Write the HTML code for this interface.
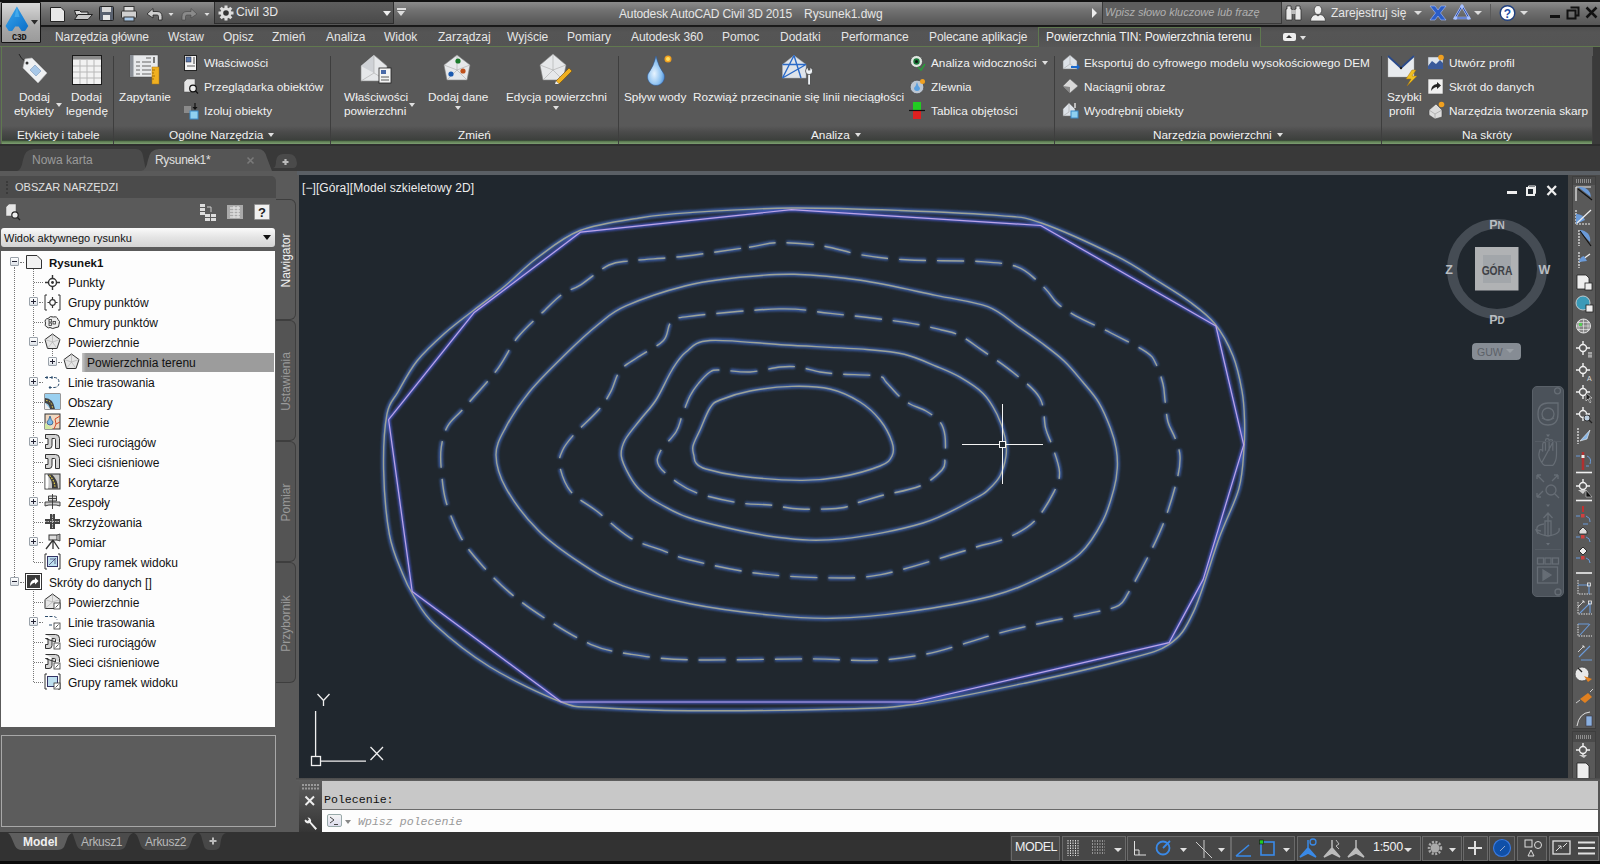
<!DOCTYPE html>
<html><head><meta charset="utf-8">
<style>
*{margin:0;padding:0;box-sizing:border-box}
html,body{width:1600px;height:864px;overflow:hidden;background:#2b2b2b;font-family:"Liberation Sans",sans-serif;font-size:12px;color:#e8e8e8}
.a{position:absolute;white-space:nowrap}
#title{left:0;top:0;width:1600px;height:27px;background:linear-gradient(#0c0c0c 0,#0c0c0c 2px,#8a8a8a 2.5px,#727272 10px,#5e5e5e 20px,#575757 24.5px,#181818 25px,#1c1c1c 27px)}
#tabs{left:0;top:27px;width:1600px;height:20px;background:linear-gradient(#4e4e4e,#555 5px,#545454)}
#ribbon{left:0;top:46px;width:1600px;height:100px;background:#595959}
#ftabs{left:0;top:146px;width:1600px;height:30px;background:#393939}
#pal{left:0;top:171px;width:299px;height:661px;background:#5a5a5a}
#draw{left:299px;top:175px;width:1268px;height:604px;background:#212830}
#rtb{left:1567px;top:171px;width:33px;height:608px;background:#505050}
#cmd{left:298px;top:779px;width:1302px;height:53px;background:#c6c6c6}
#status{left:0;top:832px;width:1600px;height:32px;background:#333}
.t{font-size:12px;color:#e6e6e6}
.tri{position:absolute;width:0;height:0;border-left:3.5px solid transparent;border-right:3.5px solid transparent;border-top:4px solid #e0e0e0}
</style></head><body>
<div id="tabs" class="a"></div>
<div id="ribbon" class="a"></div>
<div id="ftabs" class="a"></div>
<div id="pal" class="a"></div>
<div id="draw" class="a"></div>
<div id="rtb" class="a"></div>
<div id="cmd" class="a"></div>
<div id="status" class="a"></div>
<!-- TITLE BAR -->
<div id="title" class="a">
  <div class="a" style="left:0;top:0;width:1600px;height:2px;background:#111"></div>
</div>
<!-- app button -->
<div class="a" style="left:1px;top:2px;width:40px;height:41px;background:linear-gradient(#d8d8d8,#a9a9a9 60%,#9a9a9a);border:1px solid #151515;border-radius:1px">
  <svg class="a" style="left:3px;top:2px" width="36" height="38" viewBox="0 0 36 38">
    <defs><linearGradient id="lg1" x1="0" y1="0" x2="1" y2="1"><stop offset="0" stop-color="#3aa8ee"/><stop offset="1" stop-color="#0a6ec8"/></linearGradient></defs>
    <path d="M11.9 1.5 L23.3 21 L20 26 H16.6 L13.6 21.5 H10.2 L7.2 26 H3.8 L0.5 21 Z" fill="url(#lg1)"/>
    <path d="M11.9 1.5 L14.5 12 L9.5 12 Z" fill="#5cc0f8" opacity="0.5"/>
    <path d="M26 15 L33 15 L29.5 19.5 Z" fill="#2a2a2a"/>
    <text x="7" y="35" font-family="Liberation Mono" font-size="8.5" font-weight="bold" fill="#111" letter-spacing="-0.3">C3D</text>
  </svg>
</div>
<!-- QAT icons -->
<svg class="a" style="left:44px;top:2px" width="170" height="23" viewBox="0 0 170 23">
  <!-- new -->
  <path d="M6.5 5.5 H17 L20.5 9 V19.5 H6.5 Z" fill="#e8e8e8" stroke="#222" stroke-width="1"/>
  <!-- open -->
  <path d="M30.5 8.5 h5 l1.5 1.5 h7 v3 h-12 z" fill="#d8d8d8" stroke="#222"/>
  <path d="M30.5 17.5 L34 12.5 H48.5 L44 17.5 Z" fill="#c8c8c8" stroke="#222"/>
  <!-- save -->
  <rect x="55.5" y="4.5" width="14" height="14" rx="1" fill="#5a6270" stroke="#222"/>
  <rect x="58" y="5" width="9" height="5" fill="#d8d8d8"/>
  <rect x="59" y="13" width="7" height="5" fill="#e8e8e8"/>
  <!-- print -->
  <rect x="80" y="4.5" width="10" height="5" fill="#e0e0e0" stroke="#333"/>
  <rect x="77.5" y="9" width="15" height="7" rx="1" fill="#d0d0d0" stroke="#333"/>
  <rect x="80" y="15" width="10" height="4" fill="#a8c8e8" stroke="#333"/>
  <!-- undo -->
  <path d="M103 12 L109 6.5 V9.5 H113 Q118 9.5 118 14.5 V18 H114.5 V14.5 Q114.5 13 113 13 H109 V16 Z" fill="#d0d0d0" stroke="#222" stroke-width="0.8"/>
  <path d="M124.5 11 h5 l-2.5 3 z" fill="#e0e0e0"/>
  <!-- redo -->
  <path d="M153 12 L147 6.5 V9.5 H143 Q138 9.5 138 14.5 V18 H141.5 V14.5 Q141.5 13 143 13 H147 V16 Z" fill="#8a8a8a" stroke="#444" stroke-width="0.6"/>
  <path d="M160.5 11 h5 l-2.5 3 z" fill="#e0e0e0"/>
</svg>
<!-- workspace -->
<div class="a" style="left:214px;top:2px;width:180px;height:22px;background:linear-gradient(#5e5e5e,#4a4a4a);border:1px solid #2e2e2e;border-top:none"></div>
<svg class="a" style="left:217px;top:4px" width="18" height="18" viewBox="0 0 18 18">
  <g fill="#ddd"><circle cx="9" cy="9" r="5.5"/>
  <rect x="7.5" y="1.5" width="3" height="15"/><rect x="1.5" y="7.5" width="15" height="3"/>
  <rect x="7.5" y="1.5" width="3" height="15" transform="rotate(45 9 9)"/><rect x="7.5" y="1.5" width="3" height="15" transform="rotate(-45 9 9)"/></g>
  <circle cx="9" cy="9" r="2.8" fill="#333"/>
</svg>
<div class="a" style="left:236px;top:5px;font-size:12.2px;color:#e8e8e8">Civil 3D</div>
<div class="a" style="left:383px;top:11px;width:0;height:0;border-left:4px solid transparent;border-right:4px solid transparent;border-top:5px solid #eee"></div>
<div class="a" style="left:397px;top:8px;width:9px;height:2px;background:#ddd"></div>
<div class="a" style="left:397px;top:11px;width:0;height:0;border-left:4.5px solid transparent;border-right:4.5px solid transparent;border-top:5px solid #ddd"></div>
<div class="a" style="left:619px;top:7px;font-size:12px;color:#e6e6e6;letter-spacing:-0.15px">Autodesk AutoCAD Civil 3D 2015</div>
<div class="a" style="left:804px;top:7px;font-size:12px;color:#e6e6e6">Rysunek1.dwg</div>
<div class="a" style="left:1092px;top:8px;width:0;height:0;border-top:5px solid transparent;border-bottom:5px solid transparent;border-left:5px solid #eee"></div>
<div class="a" style="left:1102px;top:2px;width:180px;height:22px;background:#5e5e5e;border:1px solid #3a3a3a;border-top:none"></div>
<div class="a" style="left:1105px;top:6px;font-size:11px;font-style:italic;color:#b0b0b0">Wpisz słowo kluczowe lub frazę</div>
<svg class="a" style="left:1284px;top:4px" width="20" height="18" viewBox="0 0 20 18">
  <path d="M3 2 h4 v3 h1 v11 h-6 v-11 h1z M12 2 h4 v3 h1 v11 h-6 v-11 h1z" fill="#e8e8e8" stroke="#222" stroke-width="0.7"/>
  <rect x="7" y="6" width="5" height="4" fill="#bbb"/>
</svg>
<svg class="a" style="left:1309px;top:4px" width="18" height="18" viewBox="0 0 18 18">
  <ellipse cx="9" cy="6" rx="3.8" ry="4.5" fill="#eee" stroke="#333" stroke-width="0.7"/>
  <path d="M1.5 17 Q2 11 7 10.5 L9 12 L11 10.5 Q16 11 16.5 17 Z" fill="#eee" stroke="#333" stroke-width="0.7"/>
</svg>
<div class="a" style="left:1331px;top:6px;font-size:12px;color:#e6e6e6">Zarejestruj się</div>
<div class="a" style="left:1414px;top:11px;width:0;height:0;border-left:4px solid transparent;border-right:4px solid transparent;border-top:4px solid #ddd"></div>
<svg class="a" style="left:1429px;top:5px" width="18" height="16" viewBox="0 0 18 16">
  <path d="M1 1 h5 l3 4 l3 -4 h5 l-5.5 7 l5.5 7 h-5 l-3 -4 l-3 4 h-5 l5.5 -7z" fill="#2a5dc8" stroke="#a8c0ff" stroke-width="0.6"/>
</svg>
<svg class="a" style="left:1453px;top:4px" width="18" height="17" viewBox="0 0 18 17">
  <path d="M9 2 L16 14 H2 Z" fill="none" stroke="#a8c0ff" stroke-width="2.4"/>
  <path d="M9 2 L16 14 H2 Z" fill="none" stroke="#2a4aa8" stroke-width="1"/>
  <circle cx="9" cy="2.5" r="1.8" fill="#a8c0ff"/><circle cx="2.5" cy="14" r="1.8" fill="#a8c0ff"/><circle cx="15.5" cy="14" r="1.8" fill="#a8c0ff"/>
</svg>
<div class="a" style="left:1474px;top:11px;width:0;height:0;border-left:4px solid transparent;border-right:4px solid transparent;border-top:4px solid #ddd"></div>
<div class="a" style="left:1490px;top:4px;width:1px;height:18px;background:#5a5a5a"></div>
<svg class="a" style="left:1499px;top:4px" width="18" height="18" viewBox="0 0 18 18">
  <circle cx="8.5" cy="9" r="7.3" fill="#fff" stroke="#1f3f7f" stroke-width="1.4"/>
  <text x="8.5" y="13.5" text-anchor="middle" font-family="Liberation Sans" font-weight="bold" font-size="12" fill="#1f4fa8">?</text>
</svg>
<div class="a" style="left:1520px;top:11px;width:0;height:0;border-left:4px solid transparent;border-right:4px solid transparent;border-top:4px solid #ddd"></div>
<div class="a" style="left:1550px;top:15px;width:10px;height:3px;background:#111"></div>
<svg class="a" style="left:1566px;top:6px" width="14" height="14" viewBox="0 0 14 14">
  <path d="M4.5 1.5 h8 v8 h-3 M1.5 4.5 h8 v8 h-8 z" fill="none" stroke="#111" stroke-width="2"/>
</svg>
<svg class="a" style="left:1585px;top:6px" width="13" height="13" viewBox="0 0 13 13">
  <path d="M1.5 1.5 L11.5 11.5 M11.5 1.5 L1.5 11.5" stroke="#111" stroke-width="2.5"/>
</svg>
<!-- TABS ROW -->
<div class="a" style="left:0;top:46px;width:1600px;height:1px;background:#61784f"></div>
<div class="a" style="left:1038px;top:27px;width:223px;height:20px;background:linear-gradient(#4c4c4c,#575757);border:1px solid #5f7850;border-bottom:none"></div>
<div class="a t" style="top:30px;left:55px;letter-spacing:-0.1px">Narzędzia główne</div>
<div class="a t" style="top:30px;left:168px">Wstaw</div>
<div class="a t" style="top:30px;left:223px">Opisz</div>
<div class="a t" style="top:30px;left:272px">Zmień</div>
<div class="a t" style="top:30px;left:326px">Analiza</div>
<div class="a t" style="top:30px;left:384px">Widok</div>
<div class="a t" style="top:30px;left:438px">Zarządzaj</div>
<div class="a t" style="top:30px;left:507px">Wyjście</div>
<div class="a t" style="top:30px;left:567px">Pomiary</div>
<div class="a t" style="top:30px;left:631px;letter-spacing:-0.1px">Autodesk 360</div>
<div class="a t" style="top:30px;left:722px">Pomoc</div>
<div class="a t" style="top:30px;left:780px">Dodatki</div>
<div class="a t" style="top:30px;left:841px;letter-spacing:-0.1px">Performance</div>
<div class="a t" style="top:30px;left:929px;letter-spacing:-0.1px">Polecane aplikacje</div>
<div class="a t" style="top:30px;left:1046px;letter-spacing:-0.1px;color:#f2f2f2">Powierzchnia TIN: Powierzchnia terenu</div>
<div class="a" style="left:1283px;top:33px;width:13px;height:8px;background:#eee;border-radius:2px"></div>
<div class="a" style="left:1286px;top:35px;width:0;height:0;border-left:3.5px solid transparent;border-right:3.5px solid transparent;border-bottom:3.5px solid #333"></div>
<div class="tri" style="left:1300px;top:36px"></div>

<!-- RIBBON PANELS -->
<style>
.pn{position:absolute;top:47px;height:97px;background:#595959}
.pn:after{content:"";position:absolute;right:0;top:9px;bottom:0;width:1px;background:#3e3e3e}
.pt{position:absolute;left:0;right:0;bottom:0;height:18px;background:linear-gradient(#595959 0,#4c4c4c 30%,#3c3f3c 78%,#3a4a38 80%,#5c7a52 86%,#6e8e62 93%,#7e9e72 100%)}
.rt{position:absolute;white-space:nowrap;font-size:11.8px;color:#f2f2f2;line-height:14px}
</style>
<div class="a" style="left:0;top:144px;width:1600px;height:2px;background:#2e2e2e"></div><div class="a" style="left:1px;top:47px;width:1px;height:97px;background:#5f7850"></div>
<div class="pn" style="left:2px;width:112px"><div class="pt"></div></div>
<div class="pn" style="left:114px;width:217px"><div class="pt"></div></div>
<div class="pn" style="left:331px;width:288px"><div class="pt"></div></div>
<div class="pn" style="left:619px;width:436px"><div class="pt"></div></div>
<div class="pn" style="left:1055px;width:327px"><div class="pt"></div></div>
<div class="pn" style="left:1382px;width:211px"><div class="pt"></div></div>
<div class="a" style="left:1593px;top:47px;width:7px;height:97px;background:#3a3a3a"></div>

<!-- panel titles -->
<div class="rt" style="left:17px;top:128px">Etykiety i tabele</div>
<div class="rt" style="left:169px;top:128px">Ogólne Narzędzia</div><div class="tri" style="left:268px;top:133px"></div>
<div class="rt" style="left:458px;top:128px">Zmień</div>
<div class="rt" style="left:811px;top:128px">Analiza</div><div class="tri" style="left:855px;top:133px"></div>
<div class="rt" style="left:1153px;top:128px">Narzędzia powierzchni</div><div class="tri" style="left:1277px;top:133px"></div>
<div class="rt" style="left:1462px;top:128px">Na skróty</div>

<!-- Etykiety i tabele -->
<svg class="a" style="left:16px;top:53px" width="34" height="32" viewBox="0 0 34 32">
  <path d="M3 1 Q5 6 9 8" fill="none" stroke="#222" stroke-width="1"/>
  <path d="M9 6 L16 5 L31 20 L22 30 L7 15 Z" fill="#eef0f2" stroke="#bbb" stroke-width="0.6"/>
  <circle cx="11" cy="10" r="1.5" fill="#333"/>
  <path d="M14 17 L19 12 L25 18 L20 23 Z" fill="#a8c8e8" stroke="#6a8ab0" stroke-width="0.5"/>
</svg>
<div class="rt" style="left:19px;top:90px">Dodaj</div>
<div class="rt" style="left:14px;top:104px">etykiety</div>
<div class="tri" style="left:56px;top:103px"></div>
<svg class="a" style="left:72px;top:55px" width="30" height="30" viewBox="0 0 30 30">
  <rect x="0.5" y="0.5" width="29" height="29" fill="#f2f2f2" stroke="#1a1a1a"/>
  <rect x="1" y="1" width="28" height="3" fill="#8a8a8a"/>
  <path d="M1 4.5 H29 M1 11 H29 M1 17 H29 M1 23 H29 M8 4 V29 M15 4 V29 M22 4 V29" stroke="#b8b8b8" stroke-width="1"/>
</svg>
<div class="rt" style="left:71px;top:90px">Dodaj</div>
<div class="rt" style="left:66px;top:104px">legendę</div>

<!-- Ogólne narzędzia -->
<svg class="a" style="left:129px;top:53px" width="33" height="33" viewBox="0 0 33 33">
  <rect x="1" y="2" width="28" height="22" fill="#e8eaec" stroke="#444" stroke-width="0.5"/>
  <rect x="1" y="2" width="3.5" height="22" fill="#8a8f96"/>
  <path d="M7 9 H11 M13 9 H22 M7 13 H11 M13 13 H22 M7 17 H11 M13 17 H22 M7 21 H11 M13 21 H22 M17 5 H22" stroke="#666" stroke-width="1.2"/>
  <rect x="24" y="4" width="2" height="6" fill="#777"/>
  <rect x="23" y="14" width="7" height="17" fill="#f0b020" stroke="#b07a10" stroke-width="0.5"/>
  <path d="M23 17 h3 M23 20 h2 M23 23 h3 M23 26 h2" stroke="#8a5a00" stroke-width="0.7"/>
</svg>
<div class="rt" style="left:119px;top:90px">Zapytanie</div>
<svg class="a" style="left:183px;top:54px" width="16" height="17" viewBox="0 0 16 17">
  <rect x="1.5" y="1.5" width="12" height="15" fill="#f4f4f4" stroke="#222"/>
  <rect x="3" y="3" width="5" height="5" fill="#5a7ab0" stroke="#223" stroke-width="0.5"/>
  <rect x="10" y="3" width="2" height="7" fill="#999"/>
  <path d="M4 12 H12" stroke="#333" stroke-width="0.8"/>
</svg>
<div class="rt" style="left:204px;top:56px">Właściwości</div>
<svg class="a" style="left:183px;top:78px" width="17" height="17" viewBox="0 0 17 17">
  <path d="M1 4 L4 1 H12 V12 L9 14 H1 Z" fill="#e6e6e6" stroke="#444" stroke-width="0.5"/>
  <circle cx="10" cy="10.5" r="3.3" fill="#eee" stroke="#111" stroke-width="1.2"/>
  <path d="M12.5 13 L15 15.5" stroke="#111" stroke-width="1.3"/>
</svg>
<div class="rt" style="left:204px;top:80px">Przeglądarka obiektów</div>
<svg class="a" style="left:183px;top:102px" width="18" height="18" viewBox="0 0 18 18">
  <rect x="1" y="4" width="7" height="7" fill="#8a8a8a"/>
  <rect x="7" y="9" width="8" height="8" fill="#8fd0f0" stroke="#3a8ac8" stroke-width="1"/>
  <path d="M12 1 V6" stroke="#111" stroke-width="1.2"/><path d="M9.5 5 L12 8 L14.5 5 Z" fill="#111"/>
</svg>
<div class="rt" style="left:204px;top:104px">Izoluj obiekty</div>

<!-- Zmień -->
<svg class="a" style="left:359px;top:53px" width="34" height="32" viewBox="0 0 34 32">
  <path d="M2 13 L15 2 L28 13 V28 H2 Z" fill="#e6e8ea" stroke="#888" stroke-width="0.6"/>
  <path d="M2 13 L15 2 V20 Z" fill="#cfd2d6"/>
  <path d="M15 2 L15 20 L2 28 M15 20 L28 28" stroke="#aaa" stroke-width="0.6" fill="none"/>
  <rect x="20" y="15" width="12" height="15" fill="#f4f4f4" stroke="#222" stroke-width="0.8"/>
  <rect x="22" y="17" width="5" height="4" fill="#4a6aa8"/>
  <path d="M22 24 h8 M22 27 h8" stroke="#333" stroke-width="0.8"/>
</svg>
<div class="rt" style="left:344px;top:90px">Właściwości</div>
<div class="rt" style="left:344px;top:104px">powierzchni</div>
<div class="tri" style="left:409px;top:103px"></div>
<svg class="a" style="left:443px;top:53px" width="30" height="30" viewBox="0 0 30 30">
  <path d="M1 12 L14 2 L27 12 L24 27 H4 Z" fill="#e6e8ea" stroke="#888" stroke-width="0.6"/>
  <path d="M14 2 L14 17 L4 27 M14 17 L24 27 M1 12 L14 17 L27 12" stroke="#aaa" stroke-width="0.6" fill="none"/>
  <circle cx="15" cy="8" r="2.6" fill="#1a7a2a"/><circle cx="8" cy="21" r="2.6" fill="#1a5ab0"/><circle cx="20" cy="18" r="2.6" fill="#c0501a"/>
</svg>
<div class="rt" style="left:428px;top:90px">Dodaj dane</div>
<div class="tri" style="left:455px;top:106px"></div>
<svg class="a" style="left:539px;top:53px" width="34" height="32" viewBox="0 0 34 32">
  <path d="M1 12 L14 1 L27 12 L24 27 H4 Z" fill="#e6e8ea" stroke="#888" stroke-width="0.6"/>
  <path d="M14 1 L14 17 L4 27 M14 17 L24 27 M1 12 L14 17 L27 12" stroke="#aaa" stroke-width="0.6" fill="none"/>
  <path d="M17 28 L30 15 L33 18 L20 31 Z" fill="#f0b020" stroke="#6a4a10" stroke-width="0.6"/>
  <path d="M17 28 L20 31 L16 31 Z" fill="#eee"/>
</svg>
<div class="rt" style="left:506px;top:90px">Edycja powierzchni</div>
<div class="tri" style="left:553px;top:106px"></div>

<!-- Analiza -->
<svg class="a" style="left:643px;top:52px" width="32" height="34" viewBox="0 0 32 34">
  <defs><radialGradient id="drop" cx="0.4" cy="0.6" r="0.7"><stop offset="0" stop-color="#e8f4ff"/><stop offset="0.6" stop-color="#8ac0f0"/><stop offset="1" stop-color="#3a7ac8"/></radialGradient></defs>
  <path d="M13 4 Q15 14 21 22 A8.5 8.5 0 1 1 5 22 Q11 14 13 4 Z" fill="url(#drop)" stroke="#2a5aa0" stroke-width="0.5"/>
  <circle cx="25" cy="7" r="3.5" fill="#f0a020"/><circle cx="25" cy="7" r="2" fill="#ffe060"/>
</svg>
<div class="rt" style="left:624px;top:90px">Spływ wody</div>
<svg class="a" style="left:779px;top:53px" width="34" height="34" viewBox="0 0 34 34">
  <path d="M15 2.5 L27 11.5 V25 H3.5 V11.5 Z" fill="#dfe4ea" stroke="#a8b0b8" stroke-width="0.5"/>
  <path d="M15 2.5 L3.5 25 M15 2.5 L22 25 M3.5 11.5 H27 M3.5 25 L27 11.5" stroke="#2a6ac8" stroke-width="1.4" fill="none"/>
  <rect x="28.7" y="20" width="2.8" height="12" rx="1" fill="#eef2f6" stroke="#333" stroke-width="0.7"/>
  <circle cx="30.1" cy="18" r="3.6" fill="#eef2f6" stroke="#333" stroke-width="0.7"/>
  <rect x="28.9" y="13.8" width="2.4" height="3.6" fill="#595959"/>
</svg>
<div class="rt" style="left:693px;top:90px">Rozwiąż przecinanie się linii nieciągłości</div>
<svg class="a" style="left:909px;top:54px" width="17" height="17" viewBox="0 0 17 17">
  <circle cx="7.5" cy="7.5" r="6" fill="#dfe6e0" stroke="#333" stroke-width="0.6"/>
  <circle cx="7.5" cy="7.5" r="3.2" fill="#1a7a3a"/><circle cx="7.5" cy="7.5" r="1.5" fill="#111"/>
  <path d="M9 13 L12 16 L16 10" stroke="#2a9a3a" stroke-width="1.6" fill="none"/>
</svg>
<div class="rt" style="left:931px;top:56px">Analiza widoczności</div>
<div class="tri" style="left:1042px;top:61px"></div>
<svg class="a" style="left:909px;top:78px" width="17" height="17" viewBox="0 0 17 17">
  <circle cx="8" cy="9" r="6.8" fill="#bcc6d2" stroke="#444" stroke-width="0.6"/>
  <path d="M8 4 Q9 8 11 10 A3 3 0 1 1 5 10 Q7 8 8 4Z" fill="#5aa0e0"/>
  <circle cx="13.5" cy="3.5" r="2.5" fill="#f0a020"/>
</svg>
<div class="rt" style="left:931px;top:80px">Zlewnia</div>
<svg class="a" style="left:909px;top:101px" width="17" height="19" viewBox="0 0 17 19">
  <rect x="4" y="1" width="8" height="8" fill="#22cc22"/>
  <rect x="4" y="10" width="8" height="8" fill="#e02020"/>
  <path d="M0 9.5 H16" stroke="#111" stroke-width="1.2"/>
</svg>
<div class="rt" style="left:931px;top:104px">Tablica objętości</div>

<!-- Narzędzia powierzchni -->
<svg class="a" style="left:1062px;top:54px" width="18" height="17" viewBox="0 0 18 17">
  <path d="M1 7 L8 1 L15 7 V15 H1 Z" fill="#dde2e8" stroke="#777" stroke-width="0.5"/>
  <path d="M8 1 V10 L1 15 M8 10 L15 15" stroke="#999" stroke-width="0.5" fill="none"/>
  <path d="M9 12 H15 V10 L18 13 L15 16 V14 H9 Z" fill="#1a6ad0"/>
</svg>
<div class="rt" style="left:1084px;top:56px">Eksportuj do cyfrowego modelu wysokościowego DEM</div>
<svg class="a" style="left:1062px;top:78px" width="17" height="17" viewBox="0 0 17 17">
  <path d="M8 1 L16 8 L8 15 L1 8 Z" fill="#d8d8d8" stroke="#666" stroke-width="0.5"/>
  <path d="M1 8 L8 15 L8 9 Z" fill="#888"/>
</svg>
<div class="rt" style="left:1084px;top:80px">Naciągnij obraz</div>
<svg class="a" style="left:1062px;top:101px" width="18" height="19" viewBox="0 0 18 19">
  <path d="M1 8 L7 2 L13 8 V15 H1 Z" fill="#dde2e8" stroke="#777" stroke-width="0.5"/>
  <path d="M7 2 V11 L1 15" stroke="#999" stroke-width="0.5" fill="none"/>
  <rect x="9" y="10" width="7" height="7" fill="#8fd0f0" stroke="#3a8ac8"/>
  <path d="M13 2 V7" stroke="#fff" stroke-width="1.2"/>
</svg>
<div class="rt" style="left:1084px;top:104px">Wyodrębnij obiekty</div>

<!-- Na skróty -->
<svg class="a" style="left:1387px;top:54px" width="34" height="32" viewBox="0 0 34 32">
  <path d="M1 2 L14 14 L27 2 V23 H1 Z" fill="#e8ebee" stroke="#aaa" stroke-width="0.4"/>
  <path d="M1 2 L14 14 L27 2" fill="none" stroke="#2a4a8a" stroke-width="1.8"/>
  <circle cx="14" cy="14" r="1.2" fill="#222"/>
  <path d="M25 16 L19 25 H24 L20 32 L30 22 H25 L29 16 Z" fill="#f0c020" stroke="#a07010" stroke-width="0.5"/>
</svg>
<div class="rt" style="left:1387px;top:90px">Szybki</div>
<div class="rt" style="left:1389px;top:104px">profil</div>
<svg class="a" style="left:1427px;top:54px" width="18" height="17" viewBox="0 0 18 17">
  <rect x="1" y="3" width="15" height="12" fill="#dde4ec" stroke="#666" stroke-width="0.5"/>
  <path d="M1 12 L5 7 L9 10 L13 6 L16 9 V15 H1Z" fill="#3a5a9a"/>
  <circle cx="14" cy="3.5" r="2.8" fill="#f0a020"/>
</svg>
<div class="rt" style="left:1449px;top:56px">Utwórz profil</div>
<svg class="a" style="left:1427px;top:78px" width="17" height="17" viewBox="0 0 17 17">
  <rect x="1" y="1" width="15" height="15" fill="#f0f0f0" stroke="#555" stroke-width="0.6"/>
  <path d="M4 13 Q4 7 10 6 V4 L14 7.5 L10 11 V9 Q7 9 4 13Z" fill="#222"/>
</svg>
<div class="rt" style="left:1449px;top:80px">Skrót do danych</div>
<svg class="a" style="left:1427px;top:101px" width="18" height="19" viewBox="0 0 18 19">
  <path d="M2 9 L9 3 L15 9 V16 L8 18 L2 14Z" fill="#ddd" stroke="#444" stroke-width="0.6"/>
  <path d="M2 9 L8 13 L15 9 M8 13 V18" stroke="#888" stroke-width="0.5" fill="none"/>
  <circle cx="14.5" cy="3.5" r="2.8" fill="#f0a020"/>
</svg>
<div class="rt" style="left:1449px;top:104px">Narzędzia tworzenia skarp</div>
<!-- FILE TABS -->
<div class="a" style="left:0;top:146px;width:1600px;height:25px;background:#393939"></div>
<svg class="a" style="left:0;top:146px" width="300" height="26" viewBox="0 0 300 26">
  <path d="M17 25 Q21 25 23 14 Q25 3 34 3 H136 Q142 3 143 10 L146 25 Z" fill="#4a4a4a"/>
  <path d="M141 25 Q146 25 148 14 Q150 3 159 3 H258 Q265 3 267 12 L272 25 Z" fill="#555"/>
  <path d="M273 22 Q276 22 276 15 Q277 8 283 8 H289 Q296 8 297 17 Q297 22 293 22 Z" fill="#4a4a4a"/>
  <path d="M285.5 13 v6 M282.5 16 h6" stroke="#bbb" stroke-width="2.2"/>
  <path d="M247.5 11.5 l6 6 M253.5 11.5 l-6 6" stroke="#7a7a7a" stroke-width="1.6"/>
</svg>
<div class="a" style="left:32px;top:153px;font-size:12px;color:#9a9a9a">Nowa karta</div>
<div class="a" style="left:155px;top:153px;font-size:12px;color:#e0e0e0;letter-spacing:-0.3px">Rysunek1*</div>

<!-- PALETTE -->
<div class="a" style="left:0;top:171px;width:299px;height:661px;background:#5a5a5a"></div>

<div class="a" style="left:0;top:176px;width:276px;height:22px;background:#4b4b4b;border-radius:0 5px 0 0"></div>
<div class="a" style="left:6px;top:181px;width:2px;height:13px;border-left:2px dotted #3a3a3a"></div>
<div class="a" style="left:15px;top:181px;font-size:11px;color:#e0e0e0">OBSZAR NARZĘDZI</div>
<svg class="a" style="left:4px;top:203px" width="18" height="18" viewBox="0 0 18 18">
  <path d="M2 4 L5 1 H12 V11 L9 13 H2 Z" fill="#e6e6e6" stroke="#555" stroke-width="0.5"/>
  <circle cx="11" cy="12" r="3.2" fill="#eee" stroke="#222" stroke-width="1.2"/>
  <path d="M13.5 14.5 L16 17" stroke="#222" stroke-width="1.3"/>
</svg>
<svg class="a" style="left:199px;top:203px" width="18" height="18" viewBox="0 0 18 18">
  <rect x="1" y="1" width="5" height="3" fill="#ddd"/><rect x="1" y="5" width="5" height="3" fill="#ddd"/><rect x="1" y="9" width="5" height="3" fill="#ddd"/>
  <rect x="6" y="11" width="5" height="3" fill="#ddd"/><rect x="12" y="11" width="5" height="3" fill="#ddd"/><rect x="6" y="15" width="5" height="3" fill="#ddd"/><rect x="12" y="15" width="5" height="3" fill="#ddd"/>
  <path d="M8 4 H12 V9" stroke="#ccc" stroke-width="1" fill="none"/>
</svg>
<svg class="a" style="left:226px;top:204px" width="18" height="16" viewBox="0 0 18 16">
  <rect x="1" y="1" width="16" height="14" fill="#aaa"/>
  <path d="M4 4 H14 M4 7 H14 M4 10 H14 M4 13 H14 M8 2 V14 M12 2 V14" stroke="#ddd" stroke-width="1.3"/>
</svg>
<svg class="a" style="left:254px;top:204px" width="16" height="16" viewBox="0 0 16 16">
  <rect x="0.5" y="0.5" width="15" height="15" fill="#f0f0f0" stroke="#888" stroke-width="0.6"/>
  <text x="8" y="13" text-anchor="middle" font-family="Liberation Sans" font-weight="bold" font-size="13" fill="#222">?</text>
</svg>
<div class="a" style="left:1px;top:228px;width:274px;height:19px;background:linear-gradient(#fafafa,#e4e4e4 50%,#d4d4d4);border-radius:3px"></div>
<div class="a" style="left:4px;top:232px;font-size:11px;color:#111">Widok aktywnego rysunku</div>
<div class="a" style="left:263px;top:235px;width:0;height:0;border-left:4.5px solid transparent;border-right:4.5px solid transparent;border-top:5px solid #111"></div>

<!-- tree -->
<div class="a" style="left:1px;top:251px;width:274px;height:476px;background:#fdfdfd"></div>
<style>
.tr{position:absolute;white-space:nowrap;font-size:12px;color:#111;line-height:14px;margin-top:1px}
.dv{position:absolute;border-left:1px dotted #777;width:0}
.dh{position:absolute;border-top:1px dotted #777;height:0}
.ex{position:absolute;width:9px;height:9px;border:1px solid #9aa2aa;background:linear-gradient(#fff,#dde2e8);border-radius:1px}
.ex:before{content:"";position:absolute;left:1px;top:3px;width:5px;height:1px;background:#223}
.ex.p:after{content:"";position:absolute;left:3px;top:1px;width:1px;height:5px;background:#223}
</style>
<!-- dotted lines -->
<div class="dv" style="left:14px;top:267px;height:316px"></div>
<div class="dv" style="left:33px;top:268px;height:294px"></div>
<div class="dv" style="left:33px;top:588px;height:94px"></div>
<div class="dv" style="left:52px;top:349px;height:13px"></div>
<!-- row 262 Rysunek1 -->
<div class="ex" style="left:10px;top:257px"></div>
<div class="dh" style="left:20px;top:262px;width:4px"></div>
<svg class="a" style="left:25px;top:254px" width="18" height="16" viewBox="0 0 18 16"><path d="M1.5 1.5 H12 L16.5 6 V14.5 H1.5 Z" fill="#f2f2f2" stroke="#333" stroke-width="1"/></svg>
<div class="tr" style="left:49px;top:255px;font-weight:bold;font-size:11.5px">Rysunek1</div>
<!-- children -->
<div class="dh" style="left:34px;top:282px;width:9px"></div>
<svg class="a" style="left:44px;top:274px" width="17" height="17" viewBox="0 0 17 17"><circle cx="8.5" cy="8.5" r="4" fill="none" stroke="#333" stroke-width="1.4"/><circle cx="8.5" cy="8.5" r="1.4" fill="#333"/><path d="M8.5 1 V4.5 M8.5 12.5 V16 M1 8.5 H4.5 M12.5 8.5 H16" stroke="#333" stroke-width="1.4"/></svg>
<div class="tr" style="left:68px;top:275px">Punkty</div>

<div class="ex p" style="left:29px;top:297px"></div>
<div class="dh" style="left:39px;top:302px;width:4px"></div>
<svg class="a" style="left:44px;top:294px" width="17" height="17" viewBox="0 0 17 17"><path d="M3 1 H1 V16 H3 M14 1 H16 V16 H14" fill="none" stroke="#333" stroke-width="1"/><circle cx="8.5" cy="8.5" r="2.8" fill="none" stroke="#333" stroke-width="1.2"/><path d="M8.5 3 V5.5 M8.5 11.5 V14 M3.5 8.5 H5.5 M11.5 8.5 H13.5" stroke="#333" stroke-width="1.2"/></svg>
<div class="tr" style="left:68px;top:295px">Grupy punktów</div>

<div class="dh" style="left:34px;top:322px;width:9px"></div>
<svg class="a" style="left:44px;top:314px" width="17" height="17" viewBox="0 0 17 17"><path d="M3 13 Q0 12 1.5 9 Q0 5 4 4.5 Q6 1.5 9.5 3 Q13 2 14 5.5 Q16.5 7 15 10.5 Q15.5 14 12 13.5 Q8.5 15.5 6 13.5 Q4 14.5 3 13 Z" fill="#eee" stroke="#333" stroke-width="1"/><rect x="5" y="5.5" width="2.5" height="2.5" fill="none" stroke="#333" stroke-width="0.8"/><rect x="9" y="7.5" width="2.5" height="2.5" fill="none" stroke="#333" stroke-width="0.8"/><rect x="5" y="9" width="2.5" height="2.5" fill="none" stroke="#333" stroke-width="0.8"/></svg>
<div class="tr" style="left:68px;top:315px">Chmury punktów</div>

<div class="ex" style="left:29px;top:337px"></div>
<div class="dh" style="left:39px;top:342px;width:4px"></div>
<svg class="a" style="left:44px;top:333px" width="17" height="17" viewBox="0 0 17 17"><path d="M8.5 1 L16 6.5 L13 15.5 H3.5 L1 6.5 Z" fill="#e6e6e6" stroke="#333" stroke-width="1"/><path d="M8.5 1 V9 L3.5 15.5 M8.5 9 L13 15.5 M1 6.5 L8.5 9 L16 6.5" stroke="#aaa" stroke-width="0.6" fill="none"/></svg>
<div class="tr" style="left:68px;top:335px">Powierzchnie</div>

<div class="a" style="left:82px;top:353px;width:192px;height:19px;background:linear-gradient(90deg,#c8c8c8,#9c9c9c 4px,#9c9c9c)"></div>
<div class="ex p" style="left:48px;top:357px"></div>
<div class="dh" style="left:58px;top:362px;width:4px"></div>
<svg class="a" style="left:63px;top:353px" width="17" height="17" viewBox="0 0 17 17"><path d="M8.5 1 L16 6.5 L13 15.5 H3.5 L1 6.5 Z" fill="#e6e6e6" stroke="#333" stroke-width="1"/><path d="M8.5 1 V9 L3.5 15.5 M8.5 9 L13 15.5 M1 6.5 L8.5 9 L16 6.5" stroke="#aaa" stroke-width="0.6" fill="none"/></svg>
<div class="tr" style="left:87px;top:355px">Powierzchnia terenu</div>

<div class="ex p" style="left:29px;top:377px"></div>
<div class="dh" style="left:39px;top:382px;width:4px"></div>
<svg class="a" style="left:44px;top:374px" width="17" height="17" viewBox="0 0 17 17"><path d="M1 3.5 H10 Q15 3.5 15 8.5 Q15 13.5 10 13.5 H4" fill="none" stroke="#2a4a6a" stroke-width="1" stroke-dasharray="3 1.5"/><path d="M3 2 V5 M8 2 V5 M6 12 V15" stroke="#2a4a6a" stroke-width="1"/></svg>
<div class="tr" style="left:68px;top:375px">Linie trasowania</div>

<div class="dh" style="left:34px;top:402px;width:9px"></div>
<svg class="a" style="left:44px;top:393px" width="17" height="17" viewBox="0 0 17 17"><rect x="1" y="1" width="15" height="15" fill="#fff" stroke="#333" stroke-width="1"/><path d="M1 1 H16 V16 H1Z" fill="#9ad0f0"/><path d="M1 5 Q9 5 11 16 H6 Q5 10 1 10 Z" fill="#444"/><path d="M2 7.5 Q8 8 8.5 15" stroke="#e8d040" stroke-width="1" stroke-dasharray="1.5 1.5" fill="none"/><path d="M1 10 L6 16 H1Z" fill="#eee"/></svg>
<div class="tr" style="left:68px;top:395px">Obszary</div>

<div class="dh" style="left:34px;top:422px;width:9px"></div>
<svg class="a" style="left:44px;top:413px" width="17" height="17" viewBox="0 0 17 17"><rect x="1" y="1" width="15" height="15" fill="#f0d8c0" stroke="#333" stroke-width="1"/><path d="M10 16 L12 11 L16 9 M12 11 L11 6 L16 3" stroke="#d04a2a" stroke-width="1" fill="none"/><path d="M1 16 V10 L9 16 Z" fill="#d0e8a0"/><path d="M6 3 Q7 7 9 9 A3 3 0 1 1 3 9 Q5 7 6 3Z" fill="#7ab8e8" stroke="#2a5a8a" stroke-width="0.8"/></svg>
<div class="tr" style="left:68px;top:415px">Zlewnie</div>

<div class="ex p" style="left:29px;top:437px"></div>
<div class="dh" style="left:39px;top:442px;width:4px"></div>
<svg class="a" style="left:44px;top:433px" width="17" height="17" viewBox="0 0 17 17"><path d="M1.5 1.5 H11.5 Q15.5 1.5 15.5 5.5 V15.5 H11.5 V6.5 Q11.5 5.5 10.5 5.5 H8 V12.5 Q8 15.5 5 15.5 H1.5 V11.5 H4 V5.5 H1.5 Z" fill="#d4d4d4" stroke="#333" stroke-width="1"/></svg>
<div class="tr" style="left:68px;top:435px">Sieci rurociągów</div>

<div class="dh" style="left:34px;top:462px;width:9px"></div>
<svg class="a" style="left:44px;top:453px" width="17" height="17" viewBox="0 0 17 17"><path d="M1.5 1.5 H11.5 Q15.5 1.5 15.5 5.5 V15.5 H11.5 V6.5 Q11.5 5.5 10.5 5.5 H8 V12.5 Q8 15.5 5 15.5 H1.5 V11.5 H4 V5.5 H1.5 Z" fill="#d4d4d4" stroke="#333" stroke-width="1"/></svg>
<div class="tr" style="left:68px;top:455px">Sieci ciśnieniowe</div>

<div class="dh" style="left:34px;top:482px;width:9px"></div>
<svg class="a" style="left:44px;top:473px" width="17" height="17" viewBox="0 0 17 17"><rect x="1" y="1" width="15" height="15" fill="#c8c8c8" stroke="#333" stroke-width="1"/><path d="M1.5 1.5 H4 Q5 10 4 15.5 H1.5Z" fill="#fff"/><path d="M3 1.5 H8 Q14 7 14 15.5 H8 Q9 7 3 1.5Z" fill="#3c3c3c"/><path d="M5.5 2.5 Q11 8 11 15" stroke="#e8d040" stroke-width="1.1" stroke-dasharray="1.6 1.2" fill="none"/></svg>
<div class="tr" style="left:68px;top:475px">Korytarze</div>

<div class="ex p" style="left:29px;top:497px"></div>
<div class="dh" style="left:39px;top:502px;width:4px"></div>
<svg class="a" style="left:44px;top:493px" width="17" height="17" viewBox="0 0 17 17"><path d="M4.5 3 H12.5 V8 H4.5Z" fill="#ddd" stroke="#333" stroke-width="0.9"/><path d="M1 9 H16 V13 Q12 11.5 8.5 12 Q5 11.5 1 13Z" fill="#ccc" stroke="#333" stroke-width="0.9"/><path d="M8.5 1 V16 M4.5 5.5 H12.5" stroke="#333" stroke-width="0.9"/></svg>
<div class="tr" style="left:68px;top:495px">Zespoły</div>

<div class="dh" style="left:34px;top:522px;width:9px"></div>
<svg class="a" style="left:44px;top:513px" width="17" height="17" viewBox="0 0 17 17"><path d="M6 1 H11 V6 H16 V11 H11 V16 H6 V11 H1 V6 H6Z" fill="#444"/><path d="M8.5 1 V16 M1 8.5 H16" stroke="#ddd" stroke-width="0.8" stroke-dasharray="1.5 1"/></svg>
<div class="tr" style="left:68px;top:515px">Skrzyżowania</div>

<div class="ex p" style="left:29px;top:537px"></div>
<div class="dh" style="left:39px;top:542px;width:4px"></div>
<svg class="a" style="left:44px;top:533px" width="17" height="17" viewBox="0 0 17 17"><rect x="5" y="2" width="8" height="5" fill="#ddd" stroke="#333" stroke-width="1"/><path d="M13 2 L16 1 V8 L13 7" fill="#aaa" stroke="#333" stroke-width="0.8"/><path d="M9 7 L2 16 M9 7 V16 M9 7 L15 16" stroke="#333" stroke-width="1.3"/></svg>
<div class="tr" style="left:68px;top:535px">Pomiar</div>

<div class="dh" style="left:34px;top:562px;width:9px"></div>
<svg class="a" style="left:44px;top:553px" width="17" height="17" viewBox="0 0 17 17"><path d="M3 1 H1 V16 H3 M14 1 H16 V16 H14" fill="none" stroke="#333" stroke-width="1"/><rect x="3.5" y="3.5" width="10" height="10" fill="#bfe0f0" stroke="#336" stroke-width="1"/><path d="M5 12 L12 5 M6 6 H11 V11" stroke="#336" stroke-width="0.7" fill="none"/></svg>
<div class="tr" style="left:68px;top:555px">Grupy ramek widoku</div>

<!-- Skróty -->
<div class="ex" style="left:10px;top:577px"></div>
<div class="dh" style="left:20px;top:582px;width:4px"></div>
<svg class="a" style="left:25px;top:573px" width="17" height="17" viewBox="0 0 17 17"><rect x="0.5" y="0.5" width="16" height="16" fill="#fff" stroke="#333" stroke-width="1"/><rect x="2" y="2" width="13" height="13" fill="#3a3a3a"/><path d="M5 13 Q5 7 10 6.5 V4.5 L13.5 8 L10 11.5 V9.5 Q7.5 9.5 5 13Z" fill="#fff"/></svg>
<div class="tr" style="left:49px;top:575px">Skróty do danych []</div>

<div class="dh" style="left:34px;top:602px;width:9px"></div>
<svg class="a" style="left:44px;top:593px" width="17" height="17" viewBox="0 0 17 17"><path d="M8.5 1 L16 6.5 V15.5 H1 V6.5 Z" fill="#e6e6e6" stroke="#333" stroke-width="1"/><path d="M8.5 1 V9 L1 15.5 M1 6.5 L8.5 9 L16 6.5" stroke="#aaa" stroke-width="0.6" fill="none"/><rect x="10" y="10" width="6" height="6" fill="#fff" stroke="#333" stroke-width="0.8"/><path d="M11.5 14.5 L14.5 11.5" stroke="#333" stroke-width="0.8"/></svg>
<div class="tr" style="left:68px;top:595px">Powierzchnie</div>

<div class="ex p" style="left:29px;top:617px"></div>
<div class="dh" style="left:39px;top:622px;width:4px"></div>
<svg class="a" style="left:44px;top:613px" width="17" height="17" viewBox="0 0 17 17"><path d="M1 3.5 H9 Q13 3.5 13 7 M5 12 H9" fill="none" stroke="#2a4a6a" stroke-width="1" stroke-dasharray="3 1.5"/><rect x="10" y="10" width="6" height="6" fill="#fff" stroke="#333" stroke-width="0.8"/><path d="M11.5 14.5 L14.5 11.5" stroke="#333" stroke-width="0.8"/></svg>
<div class="tr" style="left:68px;top:615px">Linie trasowania</div>

<div class="dh" style="left:34px;top:642px;width:9px"></div>
<svg class="a" style="left:44px;top:633px" width="17" height="17" viewBox="0 0 17 17"><path d="M1.5 1.5 H11.5 Q15.5 1.5 15.5 5.5 V9 M11.5 9 V6.5 Q11.5 5.5 10.5 5.5 H8 V12.5 Q8 15.5 5 15.5 H1.5 V11.5 H4 V5.5 H1.5 Z" fill="#d4d4d4" stroke="#333" stroke-width="1"/><rect x="10" y="10" width="6" height="6" fill="#fff" stroke="#333" stroke-width="0.8"/><path d="M11.5 14.5 L14.5 11.5" stroke="#333" stroke-width="0.8"/></svg>
<div class="tr" style="left:68px;top:635px">Sieci rurociągów</div>

<div class="dh" style="left:34px;top:662px;width:9px"></div>
<svg class="a" style="left:44px;top:653px" width="17" height="17" viewBox="0 0 17 17"><path d="M1.5 1.5 H11.5 Q15.5 1.5 15.5 5.5 V9 M11.5 9 V6.5 Q11.5 5.5 10.5 5.5 H8 V12.5 Q8 15.5 5 15.5 H1.5 V11.5 H4 V5.5 H1.5 Z" fill="#d4d4d4" stroke="#333" stroke-width="1"/><rect x="10" y="10" width="6" height="6" fill="#fff" stroke="#333" stroke-width="0.8"/><path d="M11.5 14.5 L14.5 11.5" stroke="#333" stroke-width="0.8"/></svg>
<div class="tr" style="left:68px;top:655px">Sieci ciśnieniowe</div>

<div class="dh" style="left:34px;top:682px;width:9px"></div>
<svg class="a" style="left:44px;top:673px" width="17" height="17" viewBox="0 0 17 17"><path d="M3 1 H1 V16 H3 M14 1 H16 V16 H14" fill="none" stroke="#333" stroke-width="1"/><rect x="3.5" y="3.5" width="10" height="10" fill="#bfe0f0" stroke="#336" stroke-width="1"/><rect x="10" y="10" width="6" height="6" fill="#fff" stroke="#333" stroke-width="0.8"/><path d="M11.5 14.5 L14.5 11.5" stroke="#333" stroke-width="0.8"/></svg>
<div class="tr" style="left:68px;top:675px">Grupy ramek widoku</div>

<!-- description box -->
<div class="a" style="left:1px;top:735px;width:275px;height:92px;border:1px solid #a8a8a8;background:#5c5c5c"></div>

<!-- side tabs -->
<style>
.st{position:absolute;left:276px;width:20px;height:121px;background:#545454;border:1px solid #3e3e3e;border-left:none;border-radius:0 6px 6px 0}
.stt{position:absolute;left:0;top:0;width:121px;height:20px;line-height:20px;text-align:center;transform-origin:0 0;font-size:12px;color:#9a9a9a}
</style>
<div class="st" style="top:199px;background:#5a5a5a"><div class="stt" style="transform:translate(0,121px) rotate(-90deg);color:#f0f0f0">Nawigator</div></div>
<div class="st" style="top:320px"><div class="stt" style="transform:translate(0,121px) rotate(-90deg)">Ustawienia</div></div>
<div class="st" style="top:441px"><div class="stt" style="transform:translate(0,121px) rotate(-90deg)">Pomiar</div></div>
<div class="st" style="top:562px"><div class="stt" style="transform:translate(0,121px) rotate(-90deg)">Przybornik</div></div>
<!-- DRAWING AREA -->
<div class="a" style="left:297px;top:171px;width:1303px;height:4px;background:#5a5f65"></div>
<div class="a" style="left:299px;top:175px;width:1269px;height:603px;background:#20272e"></div>
<div class="a" style="left:302px;top:181px;font-size:12px;color:#ececec;letter-spacing:0.08px">[−][Góra][Model szkieletowy 2D]</div>
<div class="a" style="left:1507px;top:191px;width:10px;height:3px;background:#eee"></div>
<svg class="a" style="left:1525px;top:185px" width="13" height="12" viewBox="0 0 13 12"><path d="M3.5 2.5 V1 H10.5 V8.5 H9" fill="none" stroke="#eee" stroke-width="1"/><rect x="2" y="3" width="7" height="7" fill="none" stroke="#eee" stroke-width="2"/></svg>
<svg class="a" style="left:1546px;top:185px" width="12" height="11" viewBox="0 0 12 11"><path d="M1.5 1 L10 10 M10 1 L1.5 10" stroke="#eee" stroke-width="2.3"/></svg>
<svg class="a" style="left:299px;top:175px" width="1268" height="604" viewBox="299 175 1268 604">
<defs><filter id="gl" x="-5%" y="-5%" width="110%" height="110%"><feGaussianBlur stdDeviation="0.9"/></filter></defs>
<g fill="none" stroke-linejoin="round">
<g filter="url(#gl)"><path d="M791.0 208.0 C826.0 207.7 865.2 209.2 900.0 210.5 C934.8 211.8 976.5 213.5 1000.0 215.6 C1023.5 217.7 1021.9 216.2 1041.3 223.0 C1060.7 229.8 1097.4 246.7 1116.5 256.2 C1135.6 265.7 1143.8 272.4 1156.0 280.0 C1168.2 287.6 1180.2 294.7 1190.0 302.0 C1199.8 309.3 1207.8 315.0 1215.0 324.0 C1222.2 333.0 1228.5 344.8 1233.0 356.0 C1237.5 367.2 1240.1 380.5 1242.0 391.0 C1243.9 401.5 1244.2 409.5 1244.5 419.0 C1244.8 428.5 1244.9 436.4 1244.0 448.0 C1243.1 459.6 1243.0 473.7 1238.9 488.6 C1234.8 503.5 1227.0 516.8 1219.4 537.3 C1211.8 557.8 1201.9 594.1 1193.5 611.9 C1185.1 629.7 1181.0 636.2 1169.1 644.3 C1157.2 652.4 1146.1 654.0 1122.1 660.5 C1098.1 667.0 1059.4 675.9 1024.9 683.2 C990.4 690.5 945.6 700.0 915.1 704.3 C884.6 708.6 879.5 707.9 842.0 709.0 C804.5 710.1 730.8 711.0 690.0 710.7 C649.2 710.5 618.5 709.0 597.0 707.5 C575.5 706.0 579.1 708.8 561.3 702.0 C543.5 695.2 511.1 679.9 490.0 667.0 C468.9 654.1 447.6 636.6 434.9 624.8 C422.2 613.0 419.1 604.6 413.7 596.0 C408.3 587.4 406.4 583.6 402.4 573.3 C398.3 563.0 392.5 551.7 389.4 534.4 C386.3 517.1 384.0 489.7 383.6 469.6 C383.2 449.5 384.6 426.9 387.0 414.0 C389.4 401.1 393.0 400.8 398.0 392.0 C403.0 383.2 409.2 370.8 417.0 361.0 C424.8 351.2 435.5 341.5 445.0 333.0 C454.5 324.5 464.0 317.8 474.0 310.0 C484.0 302.2 494.5 294.7 505.0 286.0 C515.5 277.3 524.5 267.2 537.0 258.0 C549.5 248.8 562.7 237.2 580.0 230.5 C597.3 223.8 622.6 220.7 640.9 217.7 C659.2 214.7 665.0 214.2 690.0 212.6 C715.0 211.0 756.0 208.3 791.0 208.0Z" stroke="#3a5a9c" stroke-width="4.6"/>
<path d="M740.0 277.3 C758.2 275.4 774.3 273.8 794.4 274.3 C814.5 274.8 837.0 276.8 860.6 280.3 C884.2 283.8 914.7 291.0 935.9 295.4 C957.1 299.8 974.1 301.5 987.8 306.6 C1001.4 311.8 1008.9 320.3 1017.8 326.3 C1026.7 332.3 1033.3 336.7 1041.0 342.5 C1048.7 348.3 1057.2 354.4 1064.1 361.0 C1071.0 367.6 1076.8 374.9 1082.6 381.8 C1088.4 388.7 1094.2 394.9 1098.8 402.6 C1103.4 410.3 1107.5 420.4 1110.4 428.1 C1113.3 435.8 1115.1 442.2 1116.2 448.9 C1117.3 455.5 1117.7 461.4 1117.3 468.0 C1116.9 474.6 1116.4 479.8 1114.0 488.6 C1111.6 497.5 1108.4 510.3 1102.7 521.1 C1097.0 531.9 1090.3 544.2 1080.0 553.5 C1069.7 562.8 1055.8 569.9 1041.1 577.0 C1026.4 584.1 1014.4 590.2 992.0 596.0 C969.6 601.8 933.6 608.2 907.0 611.9 C880.4 615.6 855.1 617.8 832.4 618.3 C809.7 618.8 794.5 617.5 770.8 615.1 C747.1 612.7 714.6 608.6 690.0 603.7 C665.4 598.8 641.1 592.6 622.9 585.9 C604.7 579.1 594.8 572.4 580.8 563.2 C566.8 554.0 551.0 543.2 538.6 530.8 C526.2 518.4 513.3 501.2 506.2 488.6 C499.1 476.0 496.1 465.1 496.0 455.0 C495.9 444.9 499.9 438.4 505.5 427.8 C511.1 417.2 519.5 404.0 529.5 391.7 C539.5 379.4 554.2 365.3 565.7 354.0 C577.2 342.7 588.8 332.0 598.8 324.0 C608.8 316.0 611.5 312.2 625.9 305.9 C640.3 299.6 666.0 290.8 685.0 286.0 C704.0 281.2 721.8 279.2 740.0 277.3Z" stroke="#3a5a9c" stroke-width="4.6"/>
<path d="M710.0 340.5 C726.6 339.3 759.3 343.5 785.4 345.0 C811.5 346.5 846.8 347.9 866.6 349.5 C886.4 351.1 892.6 351.5 904.3 354.3 C916.0 357.1 927.4 362.7 936.7 366.5 C946.0 370.3 952.3 372.7 960.0 377.2 C967.7 381.7 976.9 387.2 983.1 393.4 C989.3 399.6 993.3 406.9 997.0 414.2 C1000.7 421.5 1003.6 430.3 1005.1 437.3 C1006.6 444.3 1006.9 449.6 1006.0 456.0 C1005.1 462.4 1002.8 470.5 1000.0 476.0 C997.2 481.5 993.0 485.3 989.0 489.0 C985.0 492.7 987.0 492.3 976.0 498.0 C965.0 503.7 945.3 516.2 923.0 523.0 C900.7 529.8 866.4 536.5 842.1 538.9 C817.8 541.3 801.6 540.4 777.3 537.3 C752.9 534.1 715.5 525.5 696.0 520.0 C676.5 514.5 669.3 509.0 660.0 504.0 C650.7 499.0 645.1 494.7 640.0 490.0 C634.9 485.3 632.5 481.3 629.4 475.7 C626.3 470.1 622.0 462.1 621.3 456.2 C620.6 450.2 621.9 446.0 625.0 440.0 C628.1 434.0 634.8 426.7 640.0 420.0 C645.2 413.3 650.7 408.3 656.0 400.0 C661.3 391.7 667.0 378.0 672.0 370.0 C677.0 362.0 679.7 356.9 686.0 352.0 C692.3 347.1 693.4 341.7 710.0 340.5Z" stroke="#3a5a9c" stroke-width="4.6"/>
<path d="M694.0 456.0 C693.5 453.2 692.0 450.3 693.0 446.0 C694.0 441.7 697.2 436.3 700.0 430.0 C702.8 423.7 706.7 413.0 710.0 408.0 C713.3 403.0 713.3 402.8 720.0 400.0 C726.7 397.2 738.0 393.3 750.0 391.0 C762.0 388.7 778.7 386.7 792.0 386.4 C805.3 386.1 818.7 386.4 830.0 389.0 C841.3 391.6 851.7 396.8 860.0 402.0 C868.3 407.2 874.7 413.3 880.0 420.0 C885.3 426.7 890.0 436.0 892.0 442.0 C894.0 448.0 894.0 452.0 892.0 456.0 C890.0 460.0 888.7 462.5 880.0 466.0 C871.3 469.5 853.3 474.6 840.0 477.0 C826.7 479.4 816.7 480.6 800.0 480.4 C783.3 480.2 755.7 477.9 740.0 476.0 C724.3 474.1 713.3 471.2 706.0 469.0 C698.7 466.8 698.0 465.2 696.0 463.0 C694.0 460.8 694.5 458.8 694.0 456.0Z" stroke="#3a5a9c" stroke-width="4.6"/>
<path d="M749.0 247.2 C764.8 244.9 766.9 242.9 779.0 242.7 C791.1 242.4 807.9 243.7 821.5 245.7 C835.1 247.7 846.6 252.3 860.6 254.7 C874.6 257.1 885.7 258.6 905.8 259.8 C925.9 261.0 962.4 260.4 981.0 261.6 C999.6 262.8 1008.0 263.7 1017.2 266.8 C1026.4 269.9 1031.3 275.9 1036.4 280.0 C1041.5 284.1 1044.4 287.8 1047.9 291.6 C1051.4 295.5 1052.6 299.1 1057.2 303.1 C1061.8 307.2 1066.7 310.9 1075.7 315.9 C1084.7 320.9 1099.3 327.0 1111.0 333.0 C1122.7 339.0 1138.5 346.6 1146.0 351.8 C1153.5 357.0 1153.2 358.6 1156.0 364.0 C1158.8 369.4 1161.5 378.0 1163.0 384.0 C1164.5 390.0 1164.2 393.7 1165.0 400.0 C1165.8 406.3 1166.3 415.7 1168.0 422.0 C1169.7 428.3 1173.0 432.3 1175.0 438.0 C1177.0 443.7 1179.6 449.2 1180.0 456.0 C1180.4 462.8 1179.8 468.0 1177.2 478.9 C1174.6 489.8 1169.2 508.1 1164.3 521.1 C1159.4 534.1 1154.0 544.8 1148.1 556.7 C1142.1 568.6 1133.5 584.3 1128.6 592.4 C1123.7 600.5 1124.3 602.1 1118.9 605.4 C1113.5 608.6 1109.2 608.9 1096.2 611.9 C1083.2 614.9 1057.1 619.7 1041.1 623.2 C1025.1 626.7 1013.2 629.4 1000.0 632.9 C986.8 636.4 974.4 640.8 962.1 644.3 C949.8 647.8 941.0 651.3 926.4 654.0 C911.8 656.7 894.0 659.7 874.6 660.5 C855.2 661.3 840.5 659.0 809.7 658.9 C778.9 658.8 720.0 660.6 690.0 659.8 C660.0 659.0 646.0 656.6 629.4 654.0 C612.8 651.4 604.6 650.2 590.5 644.3 C576.4 638.3 558.5 626.9 545.0 618.3 C531.5 609.6 520.2 601.6 509.4 592.4 C498.6 583.2 488.3 572.4 480.2 563.2 C472.1 554.0 466.5 547.5 460.8 537.3 C455.1 527.1 449.4 513.3 446.1 502.0 C442.9 490.7 442.1 478.8 441.3 469.6 C440.5 460.4 440.2 454.3 441.3 447.0 C442.4 439.7 444.0 432.4 447.8 425.9 C451.6 419.4 455.9 417.2 464.0 408.0 C472.1 398.8 487.5 382.4 496.4 370.6 C505.3 358.9 509.5 347.5 517.5 337.5 C525.5 327.5 537.1 317.7 544.6 310.4 C552.1 303.1 556.7 298.2 562.7 293.9 C568.7 289.6 573.0 289.6 580.7 284.8 C588.4 280.0 600.5 269.0 609.0 265.0 C617.5 261.0 619.4 262.2 632.0 260.7 C644.6 259.2 665.0 258.4 684.5 256.2 C704.0 253.9 733.2 249.4 749.0 247.2Z" stroke="#3a5a9c" stroke-width="4.6" stroke-dasharray="27 11"/>
<path d="M779.3 308.9 C802.9 308.4 809.4 311.1 830.5 313.4 C851.6 315.6 887.3 319.6 905.8 322.4 C924.3 325.2 932.6 327.8 941.6 330.0 C950.6 332.2 953.5 332.3 960.0 335.5 C966.5 338.7 971.9 343.2 980.8 349.4 C989.7 355.6 1003.4 364.4 1013.2 372.5 C1023.0 380.6 1034.4 388.7 1039.8 398.0 C1045.2 407.3 1043.5 420.0 1045.6 428.1 C1047.7 436.2 1050.2 439.3 1052.5 446.6 C1054.8 453.9 1059.2 464.4 1059.5 472.0 C1059.8 479.6 1058.2 483.7 1054.0 491.9 C1049.8 500.1 1042.2 513.5 1034.6 521.1 C1027.0 528.7 1018.3 533.0 1008.6 537.3 C998.9 541.6 985.0 544.3 976.2 547.0 C967.4 549.7 971.5 548.9 955.6 553.5 C939.7 558.1 902.6 570.6 881.0 574.6 C859.4 578.6 847.0 578.1 825.9 577.8 C804.8 577.5 777.2 576.0 754.6 573.0 C732.0 570.0 705.5 563.8 690.0 560.0 C674.5 556.2 671.9 554.0 661.8 550.2 C651.7 546.4 640.2 543.8 629.4 537.3 C618.6 530.8 606.7 518.9 597.0 511.3 C587.3 503.7 577.2 499.4 571.0 491.9 C564.8 484.3 561.1 473.0 559.7 466.0 C558.3 459.0 560.2 455.4 562.7 450.0 C565.2 444.6 568.7 440.5 574.7 433.8 C580.7 427.1 592.8 416.7 598.8 409.7 C604.8 402.7 607.3 398.2 610.8 391.7 C614.3 385.2 615.5 376.4 620.0 370.6 C624.5 364.8 630.8 362.0 638.0 357.0 C645.2 352.0 658.0 346.3 663.5 340.5 C669.0 334.7 666.8 326.4 671.0 322.4 C675.2 318.4 671.0 318.6 689.0 316.4 C707.0 314.1 755.7 309.4 779.3 308.9Z" stroke="#3a5a9c" stroke-width="4.6" stroke-dasharray="27 11"/>
<path d="M698.0 384.0 C701.3 380.0 706.3 374.3 710.0 372.0 C713.7 369.7 713.3 370.0 720.0 370.0 C726.7 370.0 740.0 372.5 750.0 372.0 C760.0 371.5 772.0 367.8 780.0 367.0 C788.0 366.2 791.3 366.2 798.0 367.0 C804.7 367.8 813.0 370.8 820.0 372.0 C827.0 373.2 830.3 373.3 840.0 374.0 C849.7 374.7 870.3 374.7 878.0 376.0 C885.7 377.3 882.7 378.8 886.0 382.0 C889.3 385.2 894.0 391.3 898.0 395.0 C902.0 398.7 905.3 401.3 910.0 404.0 C914.7 406.7 921.0 408.0 926.0 411.0 C931.0 414.0 936.8 417.8 940.0 422.0 C943.2 426.2 944.2 430.0 945.0 436.0 C945.8 442.0 945.5 452.3 945.0 458.0 C944.5 463.7 946.2 465.3 942.0 470.0 C937.8 474.7 930.3 481.7 920.0 486.0 C909.7 490.3 890.0 493.3 880.0 496.0 C870.0 498.7 866.7 500.0 860.0 502.0 C853.3 504.0 850.0 506.8 840.0 508.0 C830.0 509.2 811.7 509.5 800.0 509.0 C788.3 508.5 780.0 506.0 770.0 505.0 C760.0 504.0 751.7 504.8 740.0 503.0 C728.3 501.2 710.3 497.3 700.0 494.0 C689.7 490.7 684.8 487.7 678.0 483.0 C671.2 478.3 662.0 471.2 659.0 466.0 C656.0 460.8 657.2 457.7 660.0 452.0 C662.8 446.3 672.3 438.0 676.0 432.0 C679.7 426.0 679.7 422.0 682.0 416.0 C684.3 410.0 687.3 401.3 690.0 396.0 C692.7 390.7 694.7 388.0 698.0 384.0Z" stroke="#3a5a9c" stroke-width="4.6" stroke-dasharray="27 11"/>
<path d="M791.4 209.6 L1040.7 225.5 L1215.9 326.0 L1243.7 444.9 L1203.2 579.4 L1169.1 642.7 L915.1 702.0 L561.3 702.0 L412.2 591.5 L388.6 419.6 L473.9 312.8 L580.7 232.1Z" stroke="#4252b8" stroke-width="3.6"/>
</g>
<path d="M791.0 208.0 C826.0 207.7 865.2 209.2 900.0 210.5 C934.8 211.8 976.5 213.5 1000.0 215.6 C1023.5 217.7 1021.9 216.2 1041.3 223.0 C1060.7 229.8 1097.4 246.7 1116.5 256.2 C1135.6 265.7 1143.8 272.4 1156.0 280.0 C1168.2 287.6 1180.2 294.7 1190.0 302.0 C1199.8 309.3 1207.8 315.0 1215.0 324.0 C1222.2 333.0 1228.5 344.8 1233.0 356.0 C1237.5 367.2 1240.1 380.5 1242.0 391.0 C1243.9 401.5 1244.2 409.5 1244.5 419.0 C1244.8 428.5 1244.9 436.4 1244.0 448.0 C1243.1 459.6 1243.0 473.7 1238.9 488.6 C1234.8 503.5 1227.0 516.8 1219.4 537.3 C1211.8 557.8 1201.9 594.1 1193.5 611.9 C1185.1 629.7 1181.0 636.2 1169.1 644.3 C1157.2 652.4 1146.1 654.0 1122.1 660.5 C1098.1 667.0 1059.4 675.9 1024.9 683.2 C990.4 690.5 945.6 700.0 915.1 704.3 C884.6 708.6 879.5 707.9 842.0 709.0 C804.5 710.1 730.8 711.0 690.0 710.7 C649.2 710.5 618.5 709.0 597.0 707.5 C575.5 706.0 579.1 708.8 561.3 702.0 C543.5 695.2 511.1 679.9 490.0 667.0 C468.9 654.1 447.6 636.6 434.9 624.8 C422.2 613.0 419.1 604.6 413.7 596.0 C408.3 587.4 406.4 583.6 402.4 573.3 C398.3 563.0 392.5 551.7 389.4 534.4 C386.3 517.1 384.0 489.7 383.6 469.6 C383.2 449.5 384.6 426.9 387.0 414.0 C389.4 401.1 393.0 400.8 398.0 392.0 C403.0 383.2 409.2 370.8 417.0 361.0 C424.8 351.2 435.5 341.5 445.0 333.0 C454.5 324.5 464.0 317.8 474.0 310.0 C484.0 302.2 494.5 294.7 505.0 286.0 C515.5 277.3 524.5 267.2 537.0 258.0 C549.5 248.8 562.7 237.2 580.0 230.5 C597.3 223.8 622.6 220.7 640.9 217.7 C659.2 214.7 665.0 214.2 690.0 212.6 C715.0 211.0 756.0 208.3 791.0 208.0Z" stroke="#9ea395" stroke-width="1.4"/>
<path d="M740.0 277.3 C758.2 275.4 774.3 273.8 794.4 274.3 C814.5 274.8 837.0 276.8 860.6 280.3 C884.2 283.8 914.7 291.0 935.9 295.4 C957.1 299.8 974.1 301.5 987.8 306.6 C1001.4 311.8 1008.9 320.3 1017.8 326.3 C1026.7 332.3 1033.3 336.7 1041.0 342.5 C1048.7 348.3 1057.2 354.4 1064.1 361.0 C1071.0 367.6 1076.8 374.9 1082.6 381.8 C1088.4 388.7 1094.2 394.9 1098.8 402.6 C1103.4 410.3 1107.5 420.4 1110.4 428.1 C1113.3 435.8 1115.1 442.2 1116.2 448.9 C1117.3 455.5 1117.7 461.4 1117.3 468.0 C1116.9 474.6 1116.4 479.8 1114.0 488.6 C1111.6 497.5 1108.4 510.3 1102.7 521.1 C1097.0 531.9 1090.3 544.2 1080.0 553.5 C1069.7 562.8 1055.8 569.9 1041.1 577.0 C1026.4 584.1 1014.4 590.2 992.0 596.0 C969.6 601.8 933.6 608.2 907.0 611.9 C880.4 615.6 855.1 617.8 832.4 618.3 C809.7 618.8 794.5 617.5 770.8 615.1 C747.1 612.7 714.6 608.6 690.0 603.7 C665.4 598.8 641.1 592.6 622.9 585.9 C604.7 579.1 594.8 572.4 580.8 563.2 C566.8 554.0 551.0 543.2 538.6 530.8 C526.2 518.4 513.3 501.2 506.2 488.6 C499.1 476.0 496.1 465.1 496.0 455.0 C495.9 444.9 499.9 438.4 505.5 427.8 C511.1 417.2 519.5 404.0 529.5 391.7 C539.5 379.4 554.2 365.3 565.7 354.0 C577.2 342.7 588.8 332.0 598.8 324.0 C608.8 316.0 611.5 312.2 625.9 305.9 C640.3 299.6 666.0 290.8 685.0 286.0 C704.0 281.2 721.8 279.2 740.0 277.3Z" stroke="#9ea395" stroke-width="1.4"/>
<path d="M710.0 340.5 C726.6 339.3 759.3 343.5 785.4 345.0 C811.5 346.5 846.8 347.9 866.6 349.5 C886.4 351.1 892.6 351.5 904.3 354.3 C916.0 357.1 927.4 362.7 936.7 366.5 C946.0 370.3 952.3 372.7 960.0 377.2 C967.7 381.7 976.9 387.2 983.1 393.4 C989.3 399.6 993.3 406.9 997.0 414.2 C1000.7 421.5 1003.6 430.3 1005.1 437.3 C1006.6 444.3 1006.9 449.6 1006.0 456.0 C1005.1 462.4 1002.8 470.5 1000.0 476.0 C997.2 481.5 993.0 485.3 989.0 489.0 C985.0 492.7 987.0 492.3 976.0 498.0 C965.0 503.7 945.3 516.2 923.0 523.0 C900.7 529.8 866.4 536.5 842.1 538.9 C817.8 541.3 801.6 540.4 777.3 537.3 C752.9 534.1 715.5 525.5 696.0 520.0 C676.5 514.5 669.3 509.0 660.0 504.0 C650.7 499.0 645.1 494.7 640.0 490.0 C634.9 485.3 632.5 481.3 629.4 475.7 C626.3 470.1 622.0 462.1 621.3 456.2 C620.6 450.2 621.9 446.0 625.0 440.0 C628.1 434.0 634.8 426.7 640.0 420.0 C645.2 413.3 650.7 408.3 656.0 400.0 C661.3 391.7 667.0 378.0 672.0 370.0 C677.0 362.0 679.7 356.9 686.0 352.0 C692.3 347.1 693.4 341.7 710.0 340.5Z" stroke="#9ea395" stroke-width="1.4"/>
<path d="M694.0 456.0 C693.5 453.2 692.0 450.3 693.0 446.0 C694.0 441.7 697.2 436.3 700.0 430.0 C702.8 423.7 706.7 413.0 710.0 408.0 C713.3 403.0 713.3 402.8 720.0 400.0 C726.7 397.2 738.0 393.3 750.0 391.0 C762.0 388.7 778.7 386.7 792.0 386.4 C805.3 386.1 818.7 386.4 830.0 389.0 C841.3 391.6 851.7 396.8 860.0 402.0 C868.3 407.2 874.7 413.3 880.0 420.0 C885.3 426.7 890.0 436.0 892.0 442.0 C894.0 448.0 894.0 452.0 892.0 456.0 C890.0 460.0 888.7 462.5 880.0 466.0 C871.3 469.5 853.3 474.6 840.0 477.0 C826.7 479.4 816.7 480.6 800.0 480.4 C783.3 480.2 755.7 477.9 740.0 476.0 C724.3 474.1 713.3 471.2 706.0 469.0 C698.7 466.8 698.0 465.2 696.0 463.0 C694.0 460.8 694.5 458.8 694.0 456.0Z" stroke="#9ea395" stroke-width="1.4"/>
<path d="M749.0 247.2 C764.8 244.9 766.9 242.9 779.0 242.7 C791.1 242.4 807.9 243.7 821.5 245.7 C835.1 247.7 846.6 252.3 860.6 254.7 C874.6 257.1 885.7 258.6 905.8 259.8 C925.9 261.0 962.4 260.4 981.0 261.6 C999.6 262.8 1008.0 263.7 1017.2 266.8 C1026.4 269.9 1031.3 275.9 1036.4 280.0 C1041.5 284.1 1044.4 287.8 1047.9 291.6 C1051.4 295.5 1052.6 299.1 1057.2 303.1 C1061.8 307.2 1066.7 310.9 1075.7 315.9 C1084.7 320.9 1099.3 327.0 1111.0 333.0 C1122.7 339.0 1138.5 346.6 1146.0 351.8 C1153.5 357.0 1153.2 358.6 1156.0 364.0 C1158.8 369.4 1161.5 378.0 1163.0 384.0 C1164.5 390.0 1164.2 393.7 1165.0 400.0 C1165.8 406.3 1166.3 415.7 1168.0 422.0 C1169.7 428.3 1173.0 432.3 1175.0 438.0 C1177.0 443.7 1179.6 449.2 1180.0 456.0 C1180.4 462.8 1179.8 468.0 1177.2 478.9 C1174.6 489.8 1169.2 508.1 1164.3 521.1 C1159.4 534.1 1154.0 544.8 1148.1 556.7 C1142.1 568.6 1133.5 584.3 1128.6 592.4 C1123.7 600.5 1124.3 602.1 1118.9 605.4 C1113.5 608.6 1109.2 608.9 1096.2 611.9 C1083.2 614.9 1057.1 619.7 1041.1 623.2 C1025.1 626.7 1013.2 629.4 1000.0 632.9 C986.8 636.4 974.4 640.8 962.1 644.3 C949.8 647.8 941.0 651.3 926.4 654.0 C911.8 656.7 894.0 659.7 874.6 660.5 C855.2 661.3 840.5 659.0 809.7 658.9 C778.9 658.8 720.0 660.6 690.0 659.8 C660.0 659.0 646.0 656.6 629.4 654.0 C612.8 651.4 604.6 650.2 590.5 644.3 C576.4 638.3 558.5 626.9 545.0 618.3 C531.5 609.6 520.2 601.6 509.4 592.4 C498.6 583.2 488.3 572.4 480.2 563.2 C472.1 554.0 466.5 547.5 460.8 537.3 C455.1 527.1 449.4 513.3 446.1 502.0 C442.9 490.7 442.1 478.8 441.3 469.6 C440.5 460.4 440.2 454.3 441.3 447.0 C442.4 439.7 444.0 432.4 447.8 425.9 C451.6 419.4 455.9 417.2 464.0 408.0 C472.1 398.8 487.5 382.4 496.4 370.6 C505.3 358.9 509.5 347.5 517.5 337.5 C525.5 327.5 537.1 317.7 544.6 310.4 C552.1 303.1 556.7 298.2 562.7 293.9 C568.7 289.6 573.0 289.6 580.7 284.8 C588.4 280.0 600.5 269.0 609.0 265.0 C617.5 261.0 619.4 262.2 632.0 260.7 C644.6 259.2 665.0 258.4 684.5 256.2 C704.0 253.9 733.2 249.4 749.0 247.2Z" stroke="#9ea395" stroke-width="1.4" stroke-dasharray="27 11"/>
<path d="M779.3 308.9 C802.9 308.4 809.4 311.1 830.5 313.4 C851.6 315.6 887.3 319.6 905.8 322.4 C924.3 325.2 932.6 327.8 941.6 330.0 C950.6 332.2 953.5 332.3 960.0 335.5 C966.5 338.7 971.9 343.2 980.8 349.4 C989.7 355.6 1003.4 364.4 1013.2 372.5 C1023.0 380.6 1034.4 388.7 1039.8 398.0 C1045.2 407.3 1043.5 420.0 1045.6 428.1 C1047.7 436.2 1050.2 439.3 1052.5 446.6 C1054.8 453.9 1059.2 464.4 1059.5 472.0 C1059.8 479.6 1058.2 483.7 1054.0 491.9 C1049.8 500.1 1042.2 513.5 1034.6 521.1 C1027.0 528.7 1018.3 533.0 1008.6 537.3 C998.9 541.6 985.0 544.3 976.2 547.0 C967.4 549.7 971.5 548.9 955.6 553.5 C939.7 558.1 902.6 570.6 881.0 574.6 C859.4 578.6 847.0 578.1 825.9 577.8 C804.8 577.5 777.2 576.0 754.6 573.0 C732.0 570.0 705.5 563.8 690.0 560.0 C674.5 556.2 671.9 554.0 661.8 550.2 C651.7 546.4 640.2 543.8 629.4 537.3 C618.6 530.8 606.7 518.9 597.0 511.3 C587.3 503.7 577.2 499.4 571.0 491.9 C564.8 484.3 561.1 473.0 559.7 466.0 C558.3 459.0 560.2 455.4 562.7 450.0 C565.2 444.6 568.7 440.5 574.7 433.8 C580.7 427.1 592.8 416.7 598.8 409.7 C604.8 402.7 607.3 398.2 610.8 391.7 C614.3 385.2 615.5 376.4 620.0 370.6 C624.5 364.8 630.8 362.0 638.0 357.0 C645.2 352.0 658.0 346.3 663.5 340.5 C669.0 334.7 666.8 326.4 671.0 322.4 C675.2 318.4 671.0 318.6 689.0 316.4 C707.0 314.1 755.7 309.4 779.3 308.9Z" stroke="#9ea395" stroke-width="1.4" stroke-dasharray="27 11"/>
<path d="M698.0 384.0 C701.3 380.0 706.3 374.3 710.0 372.0 C713.7 369.7 713.3 370.0 720.0 370.0 C726.7 370.0 740.0 372.5 750.0 372.0 C760.0 371.5 772.0 367.8 780.0 367.0 C788.0 366.2 791.3 366.2 798.0 367.0 C804.7 367.8 813.0 370.8 820.0 372.0 C827.0 373.2 830.3 373.3 840.0 374.0 C849.7 374.7 870.3 374.7 878.0 376.0 C885.7 377.3 882.7 378.8 886.0 382.0 C889.3 385.2 894.0 391.3 898.0 395.0 C902.0 398.7 905.3 401.3 910.0 404.0 C914.7 406.7 921.0 408.0 926.0 411.0 C931.0 414.0 936.8 417.8 940.0 422.0 C943.2 426.2 944.2 430.0 945.0 436.0 C945.8 442.0 945.5 452.3 945.0 458.0 C944.5 463.7 946.2 465.3 942.0 470.0 C937.8 474.7 930.3 481.7 920.0 486.0 C909.7 490.3 890.0 493.3 880.0 496.0 C870.0 498.7 866.7 500.0 860.0 502.0 C853.3 504.0 850.0 506.8 840.0 508.0 C830.0 509.2 811.7 509.5 800.0 509.0 C788.3 508.5 780.0 506.0 770.0 505.0 C760.0 504.0 751.7 504.8 740.0 503.0 C728.3 501.2 710.3 497.3 700.0 494.0 C689.7 490.7 684.8 487.7 678.0 483.0 C671.2 478.3 662.0 471.2 659.0 466.0 C656.0 460.8 657.2 457.7 660.0 452.0 C662.8 446.3 672.3 438.0 676.0 432.0 C679.7 426.0 679.7 422.0 682.0 416.0 C684.3 410.0 687.3 401.3 690.0 396.0 C692.7 390.7 694.7 388.0 698.0 384.0Z" stroke="#9ea395" stroke-width="1.4" stroke-dasharray="27 11"/>
<path d="M791.4 209.6 L1040.7 225.5 L1215.9 326.0 L1243.7 444.9 L1203.2 579.4 L1169.1 642.7 L915.1 702.0 L561.3 702.0 L412.2 591.5 L388.6 419.6 L473.9 312.8 L580.7 232.1Z" stroke="#bca4e6" stroke-width="1.2"/>
</g></svg>
<!-- crosshair -->
<div class="a" style="left:962px;top:444px;width:81px;height:1px;background:#f4f4f4"></div>
<div class="a" style="left:1002px;top:404px;width:1px;height:80px;background:#f4f4f4"></div>
<div class="a" style="left:999px;top:441px;width:7px;height:7px;border:1px solid #f4f4f4;background:#20272e"></div>
<!-- UCS -->
<svg class="a" style="left:305px;top:690px" width="85" height="80" viewBox="305 690 85 80">
  <g stroke="#f0f0f0" stroke-width="1.3" fill="none">
  <path d="M315.6 711 V756 M321 761.1 H366"/>
  <rect x="311.5" y="756.5" width="9" height="9"/>
  <path d="M317.5 694 L323.5 700.5 L329.5 694 M323.5 700.5 V706"/>
  <path d="M370.5 747 L383 760 M383 747 L370.5 760"/>
  </g>
</svg>
<!-- ViewCube -->
<svg class="a" style="left:1440px;top:210px" width="115" height="155" viewBox="1440 210 115 155">
  <circle cx="1497" cy="269" r="45" fill="none" stroke="#454c54" stroke-width="10"/>
  <rect x="1475" y="247" width="43.5" height="43.5" fill="#b0b2b4"/>
  <rect x="1483" y="255" width="28" height="28" fill="#a2a6aa"/>
  <text x="0" y="0" transform="translate(1497 274.5) scale(0.82 1)" text-anchor="middle" font-family="Liberation Sans" font-weight="bold" font-size="12.5" fill="#3e4146">GÓRA</text>
  <g font-family="Liberation Sans" font-weight="bold" fill="#b9bdc1" text-anchor="middle">
  <text x="1497" y="229" font-size="12.5">P<tspan font-size="10">N</tspan></text>
  <text x="1497" y="324" font-size="12.5">P<tspan font-size="10">D</tspan></text>
  <text x="1449" y="274" font-size="12.5">Z</text>
  <text x="1544.5" y="274" font-size="12.5">W</text>
  </g>
  <rect x="1472.5" y="343.5" width="48" height="16" rx="3" fill="#868c94" stroke="#9aa0a8" stroke-width="0.7"/>
  <text x="1477" y="355.5" font-family="Liberation Sans" font-size="10.5" fill="#5c6168">GUW</text>
  <path d="M1506 349 h8 l-4 4 z" fill="#9aa0a6"/>
</svg>
<!-- Navigation bar -->
<div class="a" style="left:1532px;top:386px;width:32px;height:211px;background:#4b525a;border:1px solid #596068;border-radius:5px"></div>
<svg class="a" style="left:1532px;top:386px" width="32" height="211" viewBox="0 0 32 211">
  <g fill="none" stroke="#666d75" stroke-width="1.3">
  <circle cx="25.5" cy="4.8" r="3"/>
  <path d="M6 28 Q6 17 16 17 H26 V28 Q26 39 16 39 Q6 39 6 28Z"/><circle cx="16" cy="28" r="6"/><path d="M10 32 Q16 36 22 32"/>
  <path transform="translate(1.5 3) scale(0.92)" d="M9 80 Q5 74 6 70 L7 66 Q9 65 10 68 V60 Q10 58 12 58 Q13 58 13 60 V67 M13 58 V56 Q13 54 15 54 Q17 54 17 56 V67 M17 56 Q17 55 19 55 Q21 55 21 57 V67 M21 58 Q21 57 23 57 Q25 57 25 59 V71 Q25 79 21 83 H12 Q10 82 9 80Z"/>
  <path d="M5 89 L12 96 M5 89 h4 M5 89 v4 M26 89 L20 95 M26 89 h-4 M26 89 v4 M5 111 L11 105 M5 111 h4 M5 111 v-4"/><circle cx="19" cy="104" r="5"/><path d="M22.5 107.5 L27 112"/>
  <path d="M16 127 V150 M11.5 132 L16 127 L20.5 132 M13 150 V135 h6 V150"/><path d="M27 142 Q29 148 16 150 Q3 148 5 142 M5 142 Q5 139 12 138"/><path d="M6 148 L4 144 L9 145"/>
  <rect x="5.5" y="172" width="6" height="6"/><rect x="13" y="172" width="6" height="6"/><rect x="20.5" y="172" width="6" height="6"/>
  <rect x="5.5" y="181" width="20" height="16"/><path d="M11 184 L19 189 L11 194Z" fill="#666d75"/>
  <circle cx="26" cy="206" r="3"/>
  </g>
  <path d="M14 48.5 h4 l-2 2.5z M14 118.5 h4 l-2 2.5z M14 157 h4 l-2 2.5z" fill="#6a7179"/>
  <path d="M3 55.5 H29 M3 163.5 H29" stroke="#555c64" stroke-width="1"/>
</svg>
<!-- RIGHT TOOLBAR -->
<div class="a" style="left:1568px;top:175px;width:32px;height:604px;background:#474747"></div>
<div class="a" style="left:1572px;top:176px;width:24px;height:553px;background:#595959;border:1px solid #3e3e3e"></div>
<div class="a" style="left:1572px;top:731px;width:24px;height:48px;background:#595959;border:1px solid #3e3e3e"></div>
<div class="a" style="left:1573px;top:177px;width:22px;height:8px;background:#4a4a4a"></div>
<div class="a" style="left:1576px;top:179px;width:16px;height:4px;background:repeating-linear-gradient(90deg,#bbb 0 1px,transparent 1px 2px);opacity:.6"></div>
<div class="a" style="left:1573px;top:732px;width:22px;height:10px;background:#4a4a4a"></div>
<div class="a" style="left:1576px;top:735px;width:16px;height:4px;background:repeating-linear-gradient(90deg,#bbb 0 1px,transparent 1px 2px);opacity:.6"></div>
<svg class="a" style="left:1572px;top:176px" width="24" height="604" viewBox="1572 176 24 604">
  <g stroke-width="1.2" fill="none">
  <!-- 194 -->
  <path d="M1576 187 V201 M1576 187 H1591" stroke="#eee"/><path d="M1581 187 A10 10 0 0 1 1591 197 L1578 187Z" fill="#6a9ad8" stroke="none"/><path d="M1578 189 L1592 200" stroke="#111"/>
  <!-- 216 -->
  <path d="M1576 224 H1591 M1576 210 V224" stroke="#eee" stroke-dasharray="2 1"/><path d="M1576 224 V214 A9 9 0 0 1 1585 220Z" fill="#6a9ad8" stroke="none"/><path d="M1577 223 L1591 210" stroke="#eee"/>
  <!-- 238 -->
  <path d="M1579 230 V246" stroke="#eee" stroke-dasharray="2 1"/><path d="M1580 230 A10 10 0 0 1 1590 242 L1580 232Z" fill="#6a9ad8" stroke="none"/><path d="M1580 231 L1591 246" stroke="#111"/>
  <!-- 260 -->
  <path d="M1579 252 V268" stroke="#eee" stroke-dasharray="2 1"/><path d="M1579 262 L1590 254 M1579 262" stroke="#eee"/><path d="M1579 262 A7 7 0 0 1 1584 256 L1587 261Z" fill="#6a9ad8" stroke="none"/>
  <!-- 282 doc -->
  <path d="M1577 275 H1586 L1589 278 V289 H1577Z" fill="#eee" stroke="#222" stroke-width="0.8"/><rect x="1585" y="283" width="7" height="7" fill="#eee" stroke="#222" stroke-width="0.8"/>
  <!-- 304 globe -->
  <circle cx="1583" cy="303" r="7" fill="#3a9ab8" stroke="#ddd" stroke-width="0.8"/><rect x="1586" y="305" width="7" height="7" fill="#eee" stroke="#222" stroke-width="0.8"/>
  <!-- 326 globe grid -->
  <circle cx="1583.5" cy="326" r="7" fill="#888" stroke="#eee" stroke-width="0.9"/><path d="M1576.5 326 H1590.5 M1583.5 319 V333 M1579 321 V331 M1588 321 V331 M1578 322.5 H1589 M1578 329.5 H1589" stroke="#eee" stroke-width="0.6"/><rect x="1579" y="323" width="3" height="3" fill="#5c5" stroke="none"/>
  <!-- points 348..414 -->
  <g stroke="#f0f0f0" stroke-width="1.4">
  <circle cx="1583" cy="348" r="3.5"/><path d="M1583 341 V344 M1583 352 V355 M1576 348 H1579 M1587 348 H1590"/>
  <circle cx="1583" cy="370" r="3.5"/><path d="M1583 363 V366 M1583 374 V377 M1576 370 H1579 M1587 370 H1590"/>
  <circle cx="1583" cy="392" r="3.5"/><path d="M1583 385 V388 M1583 396 V399 M1576 392 H1579 M1587 392 H1590"/>
  <circle cx="1583" cy="414" r="3.5"/><path d="M1583 407 V410 M1583 418 V421 M1576 414 H1579 M1587 414 H1590"/>
  <circle cx="1583" cy="486" r="3.5"/><path d="M1583 479 V482 M1583 490 V493 M1576 486 H1579 M1587 486 H1590"/>
  <circle cx="1583" cy="750" r="3.5"/><path d="M1583 743 V746 M1583 754 V757 M1576 750 H1579 M1587 750 H1590"/>
  </g>
  <path d="M1588 353 h4 M1588 356 h4 M1589 352 v6 M1591 352 v6" stroke="#ddd" stroke-width="0.7"/>
  <text x="1587" y="381" font-size="7" font-family="Liberation Sans" fill="#ddd">A</text>
  <path d="M1586 393 L1586 401 L1588 399 L1590 403 L1591 402 L1589 398 L1592 398 Z" fill="#222" stroke="#eee" stroke-width="0.6"/>
  <circle cx="1587" cy="418" r="3" fill="#bcd" stroke="#222" stroke-width="0.8"/><path d="M1589 420 L1592 423" stroke="#222"/>
  <!-- 436 -->
  <path d="M1578 428 V444" stroke="#eee" stroke-dasharray="2 1"/><path d="M1580 441 L1590 430 L1587 439Z" fill="#8ab8e8" stroke="#eee" stroke-width="0.6"/>
  <!-- 458 red -->
  <path d="M1583 452 V470" stroke="#b03030" stroke-width="2.5"/><rect x="1581.5" y="455" width="3" height="3" fill="#eee" stroke="none"/><path d="M1576 456 H1580 M1587 456 Q1592 458 1590 464 M1586 466 H1589" stroke="#6a9ad8" stroke-width="1"/>
  <path d="M1576 472.5 H1592" stroke="#f0f0f0" stroke-width="1.6"/>
  <path d="M1578 490 H1586 L1583 494Z" fill="#ccc" stroke="none"/><path d="M1586 490 L1586 497 L1592 497Z" fill="#111" stroke="#eee" stroke-width="0.5"/>
  <path d="M1576 500.5 H1592" stroke="#f0f0f0" stroke-width="1.6"/>
  <!-- 516-558 -->
  <path d="M1576 516 H1580 M1586 516 Q1591 518 1590 522 M1583 524 H1588 M1576 537 H1580 M1586 537 Q1590 538 1590 542 M1576 558 H1580 M1586 558 Q1590 559 1590 563" stroke="#6a9ad8" stroke-width="1"/>
  <rect x="1581" y="514" width="3.5" height="3.5" fill="#d04040" stroke="none"/><rect x="1581" y="535" width="3.5" height="3.5" fill="#d04040" stroke="none"/><rect x="1581" y="556" width="3.5" height="3.5" fill="#d04040" stroke="none"/>
  <path d="M1583 506 V512" stroke="#c03030" stroke-width="2"/>
  <path d="M1579 531 L1583 527 L1587 531 V534 H1579Z" fill="#ddd" stroke="#222" stroke-width="0.8"/>
  <path d="M1583 547 L1587 551 L1583 555 L1579 551Z" fill="#eee" stroke="#111" stroke-width="0.8"/>
  <path d="M1576 573 H1592" stroke="#f0f0f0" stroke-width="1.6"/>
  <!-- 587-652 dimension -->
  <g stroke="#eee" stroke-width="0.9" stroke-dasharray="1.5 1"><path d="M1578 580 V594 H1592"/><path d="M1578 602 V614 H1592"/><path d="M1578 624 V636 H1592"/></g>
  <g stroke="#6a9ad8" stroke-width="1.1"><path d="M1578 585 H1589 V594"/><path d="M1580 613 L1590 603 V613"/><path d="M1580 635 L1590 624 M1578 624 H1589"/><path d="M1579 657 L1590 646 M1581 660 H1592"/></g>
  <rect x="1587.5" y="583" width="3" height="3" fill="none" stroke="#eee" stroke-width="0.8"/><rect x="1588.5" y="601" width="3" height="3" fill="none" stroke="#eee" stroke-width="0.8"/>
  <path d="M1578 607 L1584 601 M1582 601 h2 v2" stroke="#eee" stroke-width="0.8"/>
  <path d="M1578 652 L1584 646 M1582 646 h2 v2" stroke="#eee" stroke-width="0.8"/>
  <!-- 675 -->
  <circle cx="1582" cy="674" r="7" fill="#e8e8e8" stroke="#444" stroke-width="0.8"/><path d="M1584 676 L1592 679 L1588 682Z" fill="#e08020" stroke="none"/><path d="M1582 672 L1578 668" stroke="#222"/>
  <!-- 698 -->
  <path d="M1580 699 L1588 693 L1592 697 L1585 703Z" fill="#e08020" stroke="none"/><path d="M1576 703 L1580 700 M1590 692 L1593 689" stroke="#eee" stroke-width="0.8"/>
  <!-- 720 -->
  <path d="M1577 726 Q1579 713 1590 712" stroke="#eee" stroke-width="0.9"/><rect x="1586" y="716" width="6" height="10" fill="#8ab0e0" stroke="#334" stroke-width="0.6"/>
  <!-- 772 -->
  <path d="M1577 763 H1586 L1589 766 V779 H1577Z" fill="#eee" stroke="#222" stroke-width="0.8"/>
  <path d="M1579 755 H1587 L1584 758Z" fill="#ccc" stroke="none"/>
  </g>
</svg>
<!-- COMMAND LINE -->
<div class="a" style="left:296px;top:778px;width:1304px;height:3px;background:linear-gradient(#4a4a4a,#606060)"></div>
<div class="a" style="left:299px;top:781px;width:23px;height:51px;background:linear-gradient(#5c5c5c,#4a4a4a 50%,#353535)"></div>
<svg class="a" style="left:300px;top:783px" width="22" height="8" viewBox="0 0 22 8"><rect x="2" y="1" width="2" height="2" fill="#9a9a9a"/><rect x="2" y="4.5" width="2" height="2" fill="#9a9a9a"/><rect x="5" y="1" width="2" height="2" fill="#9a9a9a"/><rect x="5" y="4.5" width="2" height="2" fill="#9a9a9a"/><rect x="8" y="1" width="2" height="2" fill="#9a9a9a"/><rect x="8" y="4.5" width="2" height="2" fill="#9a9a9a"/><rect x="11" y="1" width="2" height="2" fill="#9a9a9a"/><rect x="11" y="4.5" width="2" height="2" fill="#9a9a9a"/><rect x="14" y="1" width="2" height="2" fill="#9a9a9a"/><rect x="14" y="4.5" width="2" height="2" fill="#9a9a9a"/><rect x="17" y="1" width="2" height="2" fill="#9a9a9a"/><rect x="17" y="4.5" width="2" height="2" fill="#9a9a9a"/></svg>
<svg class="a" style="left:303px;top:795px" width="14" height="12" viewBox="0 0 14 12"><path d="M2.5 1.5 L11 10 M11 1.5 L2.5 10" stroke="#eee" stroke-width="2"/></svg>
<svg class="a" style="left:302px;top:816px" width="17" height="16" viewBox="0 0 17 16"><path d="M2.5 4.5 A3.5 3.5 0 0 0 7.5 7 L13.5 14 L15 12.5 L9 6 A3.5 3.5 0 0 0 5.5 1.5 L7 3.5 L5.5 5 L3.5 3.5Z" fill="#eee"/></svg>
<div class="a" style="left:322px;top:781px;width:1278px;height:28px;background:#c8c8c8"></div>
<div class="a" style="left:322px;top:809px;width:1278px;height:1px;background:#6a6a6a"></div>
<div class="a" style="left:322px;top:810px;width:1276px;height:22px;background:#fdfdfd"></div>
<div class="a" style="left:324px;top:793px;font-family:'Liberation Mono',monospace;font-size:11.6px;color:#111">Polecenie:</div>
<div class="a" style="left:327px;top:814px;width:15px;height:13px;border:1px solid #9aa;background:linear-gradient(#f4f4f4,#dde);border-radius:2px"></div>
<svg class="a" style="left:328px;top:815px" width="13" height="11" viewBox="0 0 13 11"><path d="M2 2 L6 5 L2 8 M6 9.5 H10" stroke="#444" stroke-width="1" fill="none"/></svg>
<div class="a" style="left:345px;top:820px;width:0;height:0;border-left:3.5px solid transparent;border-right:3.5px solid transparent;border-top:4px solid #888"></div>
<div class="a" style="left:358px;top:815px;font-family:'Liberation Mono',monospace;font-size:11.6px;font-style:italic;color:#9a9a9a">Wpisz polecenie</div>
<div class="a" style="left:1598px;top:781px;width:2px;height:51px;background:#555"></div>

<!-- STATUS BAR -->
<div class="a" style="left:0;top:832px;width:1600px;height:32px;background:#323232"></div>
<div class="a" style="left:0;top:861px;width:1600px;height:3px;background:#0a0a0a"></div>
<div class="a" style="left:1010px;top:833px;width:590px;height:28px;background:#3e3e3e"></div>
<svg class="a" style="left:0;top:832px" width="230" height="30" viewBox="0 0 230 30">
  <path d="M8 1 H72 Q68 2 66 10 L64 15 Q62 18 57 18 H22 Q17 18 15 14 L12 7 Q10 2 8 1Z" fill="#5e5e5e"/>
  <path d="M72 1 H133 Q129 2 127 10 L125 15 Q123 18 118 18 H84 Q79 18 77 14 L74.5 7 Q73 2 72 1Z" fill="#4b4b4b"/>
  <path d="M134 1 H197 Q193 2 191 10 L189 15 Q187 18 182 18 H148 Q143 18 141 14 L138.5 7 Q137 2 134 1Z" fill="#4b4b4b"/>
  <path d="M199 1 H226 Q222 2 221 8 L220 14 Q219 18 214 18 H210 Q205 18 204 14 L202 7 Q201 2 199 1Z" fill="#474747"/>
  <path d="M213 5.5 v7 M209.5 9 h7" stroke="#bbb" stroke-width="2"/>
</svg>
<div class="a" style="left:23px;top:835px;font-size:12px;font-weight:bold;color:#f0f0f0">Model</div>
<div class="a" style="left:81px;top:835px;font-size:12px;color:#b8b8b8;letter-spacing:-0.3px">Arkusz1</div>
<div class="a" style="left:145px;top:835px;font-size:12px;color:#b8b8b8;letter-spacing:-0.3px">Arkusz2</div>
<style>.sb{position:absolute;top:836px;height:25px;border:1px solid #6a6a6a;background:#474747}</style>
<div class="sb" style="left:1011px;width:49px"></div>
<div class="sb" style="left:1062px;width:64px"></div>
<div class="sb" style="left:1127px;width:104px"></div>
<div class="sb" style="left:1231px;width:64px"></div>
<div class="sb" style="left:1297px;width:124px"></div>
<div class="sb" style="left:1422px;width:40px"></div>
<div class="sb" style="left:1463px;width:25px"></div>
<div class="sb" style="left:1489px;width:26px"></div>
<div class="sb" style="left:1517px;width:30px"></div>
<div class="sb" style="left:1549px;width:50px"></div>
<div class="a" style="left:1015px;top:840px;font-size:12.5px;color:#f0f0f0;letter-spacing:-0.5px">MODEL</div>
<svg class="a" style="left:1062px;top:836px" width="538" height="26" viewBox="1062 836 538 26">
  <g stroke="#e0e0e0" stroke-width="1">
  <path d="M1068 840 V856 M1070.5 840 V856 M1073 840 V856 M1075.5 840 V856 M1078 840 V856" stroke-dasharray="1.5 1"/>
  <path d="M1092 841 H1105 M1092 844 H1105 M1092 847 H1105 M1092 850 H1105 M1092 853 H1105" stroke-dasharray="1 1.5" stroke-width="1.2"/>
  <path d="M1134.5 841 V855 H1146 M1134.5 850 H1139 V855" fill="none"/>
  <path d="M1196 842 L1212 858 M1204 840 V858" stroke="#ccc"/>
  </g>
  <g fill="#e0e0e0"><path d="M1114 848 h8 l-4 4z M1180 848 h7 l-3.5 4z M1218 848 h7 l-3.5 4z M1283 848 h7 l-3.5 4z M1404 848 h8 l-4 4z M1449 848 h7 l-3.5 4z"/></g>
  <circle cx="1163" cy="848" r="6.5" fill="none" stroke="#3a8ae8" stroke-width="1.8"/><path d="M1163 848 L1170 841" stroke="#3a8ae8" stroke-width="1.8"/>
  <path d="M1236 856 H1251 M1236 856 L1249 845" stroke="#3a8ae8" stroke-width="1.6" fill="none"/>
  <rect x="1261" y="842" width="13" height="13" fill="none" stroke="#3a8ae8" stroke-width="1.6"/><rect x="1259.5" y="840" width="4" height="4" fill="#2c2" stroke="#111" stroke-width="0.6"/>
  <path d="M1300 857 L1308 848 L1316 857 L1308 853Z M1308 848 V840" fill="#3a8ae8" stroke="#3a8ae8" stroke-width="1.5"/><circle cx="1313" cy="842" r="3" fill="none" stroke="#3a8ae8" stroke-width="1.3"/>
  <path d="M1324 857 L1332 848 L1340 857 L1332 853Z M1332 848 V840" fill="#bbb" stroke="#bbb" stroke-width="1.5"/><path d="M1336 840 L1339 844 L1336 846 L1339 849" stroke="#bbb" stroke-width="1" fill="none"/>
  <path d="M1348 857 L1356 848 L1364 857 L1356 853Z M1356 848 V840" fill="#bbb" stroke="#bbb" stroke-width="1.5"/>
  <circle cx="1435" cy="848" r="4.5" fill="#aaa"/><circle cx="1435" cy="848" r="6" fill="none" stroke="#aaa" stroke-width="2.5" stroke-dasharray="2 1.5"/>
  <path d="M1475 841 V855 M1468 848 H1482" stroke="#e0e0e0" stroke-width="2"/>
  <circle cx="1502" cy="848" r="8.5" fill="#1050a8" stroke="#3a7ae0" stroke-width="1.2"/><path d="M1500 851 L1505 846" stroke="#9ac" stroke-width="1"/>
  <g fill="none" stroke="#e0e0e0" stroke-width="1"><rect x="1525" y="840" width="7" height="7"/><circle cx="1538" cy="845" r="3.5"/><path d="M1528 856 L1531 850 L1534 856Z"/></g>
  <rect x="1553" y="841" width="17" height="13" fill="none" stroke="#e0e0e0" stroke-width="1.3"/><path d="M1556 851 L1561 846 M1561 849 V846 H1558 M1567 843 L1563 847" stroke="#e0e0e0" stroke-width="1"/>
  <path d="M1578 842.5 H1595 M1578 848 H1595 M1578 853.5 H1595" stroke="#e0e0e0" stroke-width="2"/>
  </g>
</svg>
<div class="a" style="left:1373px;top:840px;font-size:12.5px;color:#f0f0f0;letter-spacing:-0.3px">1:500</div>
</body></html>
